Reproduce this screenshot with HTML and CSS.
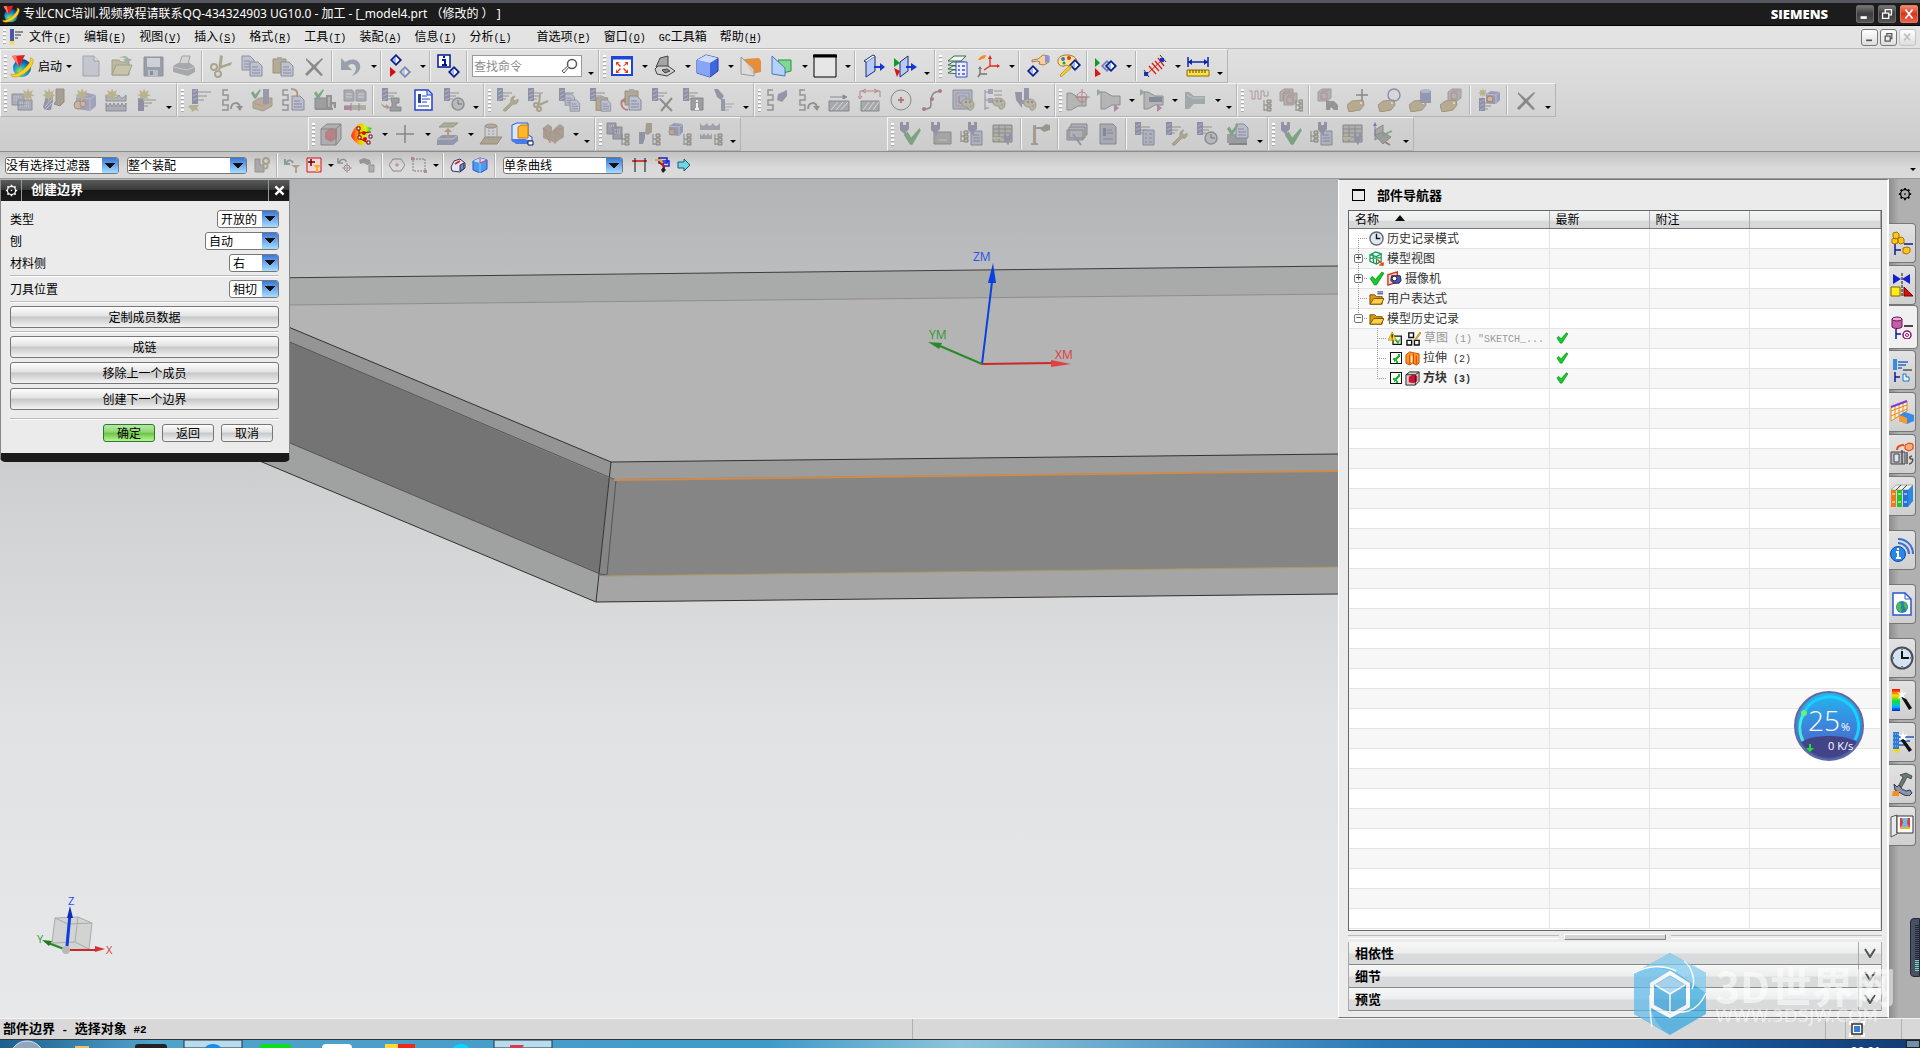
FILE: index.html
```html
<!DOCTYPE html>
<html lang="zh-CN">
<head>
    <meta charset="UTF-8">
    <meta name="viewport" content="width=device-width, initial-scale=1.0">
    <title>UG10.0 - 加工 - [_model4.prt]</title>
    <link rel="stylesheet" href="styles.css">
</head>
<body>

    <!-- 图标库 -->
    <svg class="sprite" aria-hidden="true">
        <defs>
            <linearGradient id="g-blue" x1="0" y1="0" x2="1" y2="1"><stop offset="0" stop-color="#dbe6ff"/><stop offset="1" stop-color="#3f6ee0"/></linearGradient>
            <linearGradient id="g-rain" x1="0" y1="0" x2="1" y2="0"><stop offset="0" stop-color="#f22"/><stop offset=".4" stop-color="#fb0"/><stop offset=".7" stop-color="#cf0"/><stop offset="1" stop-color="#1b3"/></linearGradient>
            <linearGradient id="g-rainv" x1="0" y1="0" x2="0" y2="1"><stop offset="0" stop-color="#f00"/><stop offset=".3" stop-color="#fd0"/><stop offset=".55" stop-color="#1d3"/><stop offset=".8" stop-color="#0bf"/><stop offset="1" stop-color="#11d"/></linearGradient>
            <radialGradient id="g-globe" cx=".4" cy=".7" r=".7"><stop offset="0" stop-color="#9df04a"/><stop offset=".5" stop-color="#1ba0c8"/><stop offset="1" stop-color="#0a3f9a"/></radialGradient>
            <!-- 公用部件 -->
            <g id="p-mill"><path d="M2 1h6v15H2z" fill="#5d648e"/><path d="M3 4l4-2M3 8l4-2M3 12l4-2" stroke="#9aa0c0"/><path d="M8 4h13M8 8h9M8 12h6" stroke="#666" fill="none"/></g>
            <g id="p-mill-s"><path d="M2 0h6v13H2z" fill="#5d648e"/><path d="M3 4l4-2M3 8l4-2M3 12l4-2" stroke="#9aa0c0"/><path d="M8 5h9M8 8h6M8 11h3" stroke="#666" fill="none"/></g>
            <g id="p-star"><path d="M7 0l1.500 4L12 2l-1.500 4L14 7.500l-4 1L11.500 12 8 10l-1.500 4L5.500 10 2 12l1.500-3.500L0 7l3.500-1L2 2l4 2z" fill="#a99a58"/></g>
            <g id="p-tree"><path d="M1 0v11M1 5h4M1 10h4" stroke="#555" fill="none"/><path d="M4 0h4v3H4zM4 4h4v3H4zM4 8h4v3H4z" fill="#b5a878" stroke="#555"/></g>
            <g id="p-doc"><path d="M0 0h8l4 4v10H0z" fill="#aab0cc" stroke="#555b80"/><path d="M2 5h6M2 8h8M2 11h8" stroke="#555b80"/></g>
            <g id="p-clock"><circle cx="7" cy="7" r="6" fill="#a5a9b2" stroke="#5e6064" stroke-width="1.500"/><path d="M7 3v4h4" stroke="#333" fill="none"/></g>
            <g id="p-check"><path d="M0 6l3-3 3 5L13 0l1 2L7 14H5z" fill="#3c8a48"/></g>
            <g id="p-snake"><path d="M9 2H4v5h5v5H4v5h5v5H3" stroke="#686868" fill="none" stroke-width="1.500"/></g>
            <g id="p-cube"><path d="M0 4l5-3 9 1v8l-4 4-10-1z" fill="#7076a8"/><path d="M0 4l10 1 4-3M10 5v9" stroke="#a8adce" fill="none"/></g>
            <g id="p-wrench"><path d="M2 14l7-7c-1-3 1-6 4-6l-2 3 2 2 3-2c1 4-2 6-5 5l-7 7c-2 1-4-1-2-2z" fill="#988c5c" stroke="#6b6440" stroke-width=".6"/></g>
            <g id="p-tag"><path d="M0 5l5-4 11-1 1 5-4 5-11 2z" fill="#a88f58" stroke="#7d6a45"/><circle cx="14" cy="3" r="1" fill="#eee"/></g>
            <g id="p-diamond"><path d="M6 0l6 6-6 6-6-6z" fill="#0a1d86"/><path d="M6 2.500L9.500 6 6 9.500 2.500 6z" fill="#fff"/><path d="M6 2.500v7L2.500 6z" fill="#94b7f5"/></g>
            <g id="p-pal"><path d="M7 1c4 0 7 2 7 6s-3 6-5 5 0-3-2-3-4 0-5-3 1-5 5-5z" fill="#a89f7c" stroke="#77704f"/><circle cx="6" cy="4" r="1.300" fill="#4b6aa8"/><circle cx="10" cy="4" r="1.300" fill="#a84b4b"/><circle cx="11" cy="8" r="1.300" fill="#4ba860"/></g>
            <g id="p-clip"><path d="M0 2h13v14H0z" fill="#a08a58" stroke="#6f6244"/><path d="M4 0h5v4H4z" fill="#888"/></g>
            <g id="p-probe"><path d="M0 0h3v3h3V0h3v7l-3 3v4l-2-3L2 10 0 8z" fill="#666c90"/><path d="M3 10h3l-1 4z" fill="#94559c"/></g>
            <g id="p-funnel"><path d="M0 3h4l7 4h8v9h-8l-7 4H0z" fill="#9fa1a1" stroke="#5c5e60"/></g>
            <g id="p-redbox"><path d="M0 4l4-3h9v9l-4 3H0z" fill="#999" stroke="#777"/><path d="M3 5h6v6H3zM3 5l2-2h6" fill="none" stroke="#b05a5a"/></g>
        </defs>

        <symbol id="nx" viewBox="0 0 24 24"><circle cx="12" cy="14" r="9" fill="url(#g-globe)"/><path d="M1 20c3 2 10-2 15-7 4-4 5-7 4-9 4 0 4 4 1 9-4 6-11 10-16 10-3 0-4-1-4-3z" fill="#ffd21c" stroke="#b88400" stroke-width=".5"/><path d="M2 2l13-1-6 12z" fill="#e02020"/><path d="M2 2l4-1 3 12z" fill="#ff7a6a"/></symbol>
        <symbol id="new" viewBox="0 0 24 24"><path d="M4 2h11l5 5v15H4z" fill="#b3b8ca" stroke="#7a7f96"/><path d="M15 2v5h5" fill="#dde0ea" stroke="#7a7f96"/></symbol>
        <symbol id="open" viewBox="0 0 24 24"><path d="M2 6h7l2 2h8v13H2z" fill="#aaa06c" stroke="#7d7750"/><path d="M2 21l4-10h16l-4 10z" fill="#bdb483" stroke="#7d7750"/><path d="M9 5c3-4 8-4 10 0h3l-5 5-4-5h3c-2-2-4-2-7 0z" fill="#6f9a77"/></symbol>
        <symbol id="save" viewBox="0 0 24 24"><path d="M3 3h19v19H3z" fill="#6c7590" stroke="#586078"/><path d="M6 4h13v9H6z" fill="#c3c9d4"/><path d="M7 16h10v6H7z" fill="#a6abb8"/><path d="M9 17h3v4H9z" fill="#555d74"/></symbol>
        <symbol id="print" viewBox="0 0 24 24"><path d="M7 11l3-9h8l-2 9z" fill="#c9ccd2" stroke="#777"/><path d="M1 12l5-3h12l5 4v5l-7 4L1 18z" fill="#80858e"/><path d="M1 13l14 3 8-3" stroke="#b9bcc2" fill="none"/></symbol>
        <symbol id="cut" viewBox="0 0 24 24"><path d="M11 1l3 1-2 13-3 2zM23 8l-1 3-12 4 1-3z" fill="#8c8154"/><circle cx="5" cy="13" r="3" fill="none" stroke="#8c8154" stroke-width="2"/><circle cx="9" cy="20" r="3" fill="none" stroke="#8c8154" stroke-width="2"/></symbol>
        <symbol id="copy" viewBox="0 0 24 24"><use href="#p-doc" x="2" y="2"/><use href="#p-doc" x="10" y="8"/></symbol>
        <symbol id="paste" viewBox="0 0 24 24"><use href="#p-clip" x="2" y="3"/><use href="#p-doc" x="10" y="8"/></symbol>
        <symbol id="x" viewBox="0 0 24 24"><path d="M4 4l8 7 8-7 1 1-7 8 7 8-2 1-7-7-7 7-2-2 7-7-6-7z" fill="#555"/></symbol>
        <symbol id="undo" viewBox="0 0 24 24"><path d="M2 4v12h11l-4-4c4-4 8-1 8 2s-2 6-4 8c6-2 9-6 8-11S14 3 6 8z" fill="#667890"/></symbol>
        <symbol id="disp" viewBox="0 0 24 24"><use href="#p-diamond" x="2" y="0"/><path d="M2 13v10l6-5z" fill="#d01010"/><g opacity=".45"><use href="#p-diamond" x="11" y="12"/></g></symbol>
        <symbol id="info" viewBox="0 0 24 24"><path d="M1 1h12v12H1z" fill="#fff" stroke="#001a90" stroke-width="1.500"/><path d="M5 6h3v5M5 11h5M6 3h2" stroke="#001a90" stroke-width="2" fill="none"/><use href="#p-diamond" x="11" y="12"/></symbol>
        <symbol id="search" viewBox="0 0 16 16"><circle cx="10" cy="6" r="4.500" fill="none" stroke="#555" stroke-width="1.500"/><path d="M7 9l-5 6-2-2 6-5" fill="#fff" stroke="#555"/></symbol>
        <symbol id="fit" viewBox="0 0 24 24"><path d="M2 3h20v18H2z" fill="#fff" stroke="#1d45d8" stroke-width="2"/><path d="M2 4h20" stroke="#1d45d8" stroke-width="3"/><path d="M6 8h4L8 9l3 3-1 1-3-3-1 2zM18 8h-4l2 1-3 3 1 0 3-2 1 2zM6 19h4l-2-1 3-3-1-1-3 3-1-2zM18 19h-4l2-1-3-3 1-1 3 3 1-2z" fill="#e8351a"/></symbol>
        <symbol id="hinge" viewBox="0 0 24 24"><path d="M3 13L7 4l8-2v11z" fill="#a5a5a5" stroke="#444"/><path d="M2 15l3-3 10 0 7 5-8 5-10-2z" fill="#d0d0d0" stroke="#444"/><path d="M9 16l5-1 3 2-5 2z" fill="#888" stroke="#444"/></symbol>
        <symbol id="cube" viewBox="0 0 24 24"><path d="M1 6l9-5 12 3v13l-8 6-13-4z" fill="#3f66dd" stroke="#1d3fae"/><path d="M1 6l13 3v14L1 19z" fill="#86a6f5"/><path d="M1 6l9-5 12 3-8 5z" fill="#cfdcff"/></symbol>
        <symbol id="sect1" viewBox="0 0 24 24"><path d="M5 5l15-1 2 3v11l-9 2z" fill="#e88d3a"/><path d="M2 3l13 12v7L2 20z" fill="#dcdcd8" fill-opacity=".8" stroke="#999"/></symbol>
        <symbol id="sect2" viewBox="0 0 24 24"><path d="M8 6h13v11l-8 2z" fill="#7edb8e" stroke="#2f8b43"/><path d="M2 2l13 12v8L2 20z" fill="#b5d0fa" stroke="#4a78c0"/></symbol>
        <symbol id="frame" viewBox="0 0 24 24"><path d="M1 1h22v22H1z" fill="#e6e6e6" stroke="#000"/><path d="M0 2h24" stroke="#000" stroke-width="3"/></symbol>
        <symbol id="clip1" viewBox="0 0 24 24"><path d="M4 8l9-6v15l-9 6z" fill="#b8cbf8" stroke="#1c2a70"/><path d="M4 8L2 7l9-6 2 1" fill="#fff" stroke="#1c2a70"/><path d="M12 12h6V9l5 4-5 4v-3h-6z" fill="#1136d6"/></symbol>
        <symbol id="clip2" viewBox="0 0 24 24"><path d="M7 8l8-6v15l-8 6z" fill="#b8cbf8" stroke="#1c2a70"/><path d="M13 12h5V9l6 4-6 4v-3h-5z" fill="#1136d6"/><path d="M1 4v9l6-4z" fill="#0d9a28"/><path d="M1 14l6 3-3 6z" fill="#d91717"/></symbol>
        <symbol id="layers" viewBox="0 0 24 24"><g fill="#eef5ee" stroke="#3b6b4b"><path d="M2 19l5-3h12l-4 4zM2 15l5-3h12l-4 4zM2 11l5-3h12l-4 4zM2 7l6-5h12l-5 5z"/></g><path d="M10 8h11v15H10z" fill="#eaf0ff" stroke="#3c50c8"/><path d="M12 12h2M12 16h2M12 20h2M16 12h3M16 16h3M16 20h3" stroke="#3c50c8" stroke-width="1.500"/></symbol>
        <symbol id="csys" viewBox="0 0 24 24"><path d="M13 4v8h9M13 12l-6 4" stroke="#e02a1a" fill="none" stroke-width="1.300"/><path d="M11 5l2-4 2 4zM20 10l3 2-3 2z" fill="#e02a1a"/><path d="M1 6c2-4 5-5 8-5l-1 3-5 2z" fill="#ff8a1c"/><path d="M3 14v6h7M3 20l-2 3" stroke="#777" stroke-width="1.500" fill="none"/><path d="M1 15l2-3 2 3z" fill="#777"/></symbol>
        <symbol id="hand" viewBox="0 0 24 24"><use href="#p-diamond" x="1" y="11"/><path d="M6 6l6-1 5-4 6 1v6l-5 3-5-1 1-2-3-1-5 1z" fill="#ffcf9a" stroke="#8a5a2a" stroke-width=".7"/><path d="M19 1l4 1v6l-4 1z" fill="#7e97e6"/></symbol>
        <symbol id="palette" viewBox="0 0 24 24"><path d="M10 1c6 0 10 3 10 7s-5 5-8 4-2-1-5 0-7-2-6-6 5-5 9-5z" fill="#ffe19a" stroke="#9a7a2a"/><circle cx="6" cy="5" r="2" fill="#3077e0"/><circle cx="12" cy="4" r="2" fill="#e03a2a"/><circle cx="7" cy="9" r="1.500" fill="#1fa03a"/><use href="#p-diamond" x="12" y="5"/><path d="M11 13l-8 8 1 2 9-8 2-4z" fill="#ffcf1c" stroke="#9a7a2a" stroke-width=".6"/></symbol>
        <symbol id="replay" viewBox="0 0 24 24"><path d="M1 4v9l5-4z" fill="#0d9a28"/><path d="M1 14v9l6-3z" fill="#d91717"/><g opacity=".5"><use href="#p-diamond" x="7" y="6"/></g><use href="#p-diamond" x="11" y="6"/></symbol>
        <symbol id="meas1" viewBox="0 0 24 24"><path d="M3 21L21 4" stroke="#d92020"/><path d="M6 12l7 8M9 9l7 8M12 7l7 8M15 4l6 8" stroke="#d92020" stroke-width="1.300"/><path d="M1 18h4v4H1zM17 4h4v4h-4z" fill="#1c2fd0"/><path d="M17 1l6 7M1 16l5 7" stroke="#333"/></symbol>
        <symbol id="meas2" viewBox="0 0 24 24"><path d="M2 3v10M22 3v10M2 8h20" stroke="#0a28a8" stroke-width="1.500"/><path d="M2 8l4-3v6zM22 8l-4-3v6z" fill="#0a28a8"/><path d="M1 16h22v6H1z" fill="#ffe14a" stroke="#8a6d00"/><path d="M4 16v3M7 16v3M10 16v3M13 16v3M16 16v3M19 16v3" stroke="#5a4600"/></symbol>

        <symbol id="c-prog" viewBox="0 0 24 24"><path d="M1 6h12v11H1zM7 12h14v10H7z" fill="#8c91ae" stroke="#596080"/><path d="M3 9h8M3 12h4M9 15h10M9 18h10" stroke="#c9cce0" stroke-dasharray="1 1"/><use href="#p-star" x="10"/></symbol>
        <symbol id="c-tool" viewBox="0 0 24 24"><path d="M14 1h8v13l-4 4-6-2 2-3z" fill="#8a7a62" stroke="#6b5f4b"/><path d="M4 8h7v5l-2 9H3l-2-3z" fill="#666c90"/><path d="M3 19l7-8M3 22l7-7" stroke="#b9bcd4"/><use href="#p-star"/></symbol>
        <symbol id="c-geo" viewBox="0 0 24 24"><path d="M3 9l8-5 12 3v11l-6 5-14-2z" fill="#7b81b0"/><path d="M3 9l14 2v12M17 11l6-4" stroke="#a9aed0" fill="none"/><circle cx="5" cy="17" r="4" fill="#c9a06a" stroke="#8e5b4b"/><circle cx="10" cy="16" r="3" fill="#c9a06a" stroke="#8e5b4b"/><use href="#p-star" x="2"/></symbol>
        <symbol id="c-meth" viewBox="0 0 24 24"><path d="M2 7v6h20V7c-3 4-5 4-7 0-3 4-5 4-7 0-2 3-4 3-6 0z" fill="#9aa0b0" stroke="#5b6070"/><path d="M2 15l2 4 2-4 2 4 2-4 2 4 2-4 2 4 2-4 2 4 2-4v8H2z" fill="#8c93ac" stroke="#5b6070"/><use href="#p-star" x="1"/></symbol>
        <symbol id="c-op" viewBox="0 0 24 24"><path d="M3 10h6v13H3z" fill="#5d648e"/><path d="M9 12h12M9 15h8M9 18h4" stroke="#666"/><use href="#p-star" x="2"/></symbol>
        <symbol id="gen" viewBox="0 0 24 24"><g transform="translate(2 0)"><use href="#p-mill"/></g><path d="M2 17h9l-2 3 2 3-4-1-3 2-1-3-3-2z" fill="#a99a58"/></symbol>
        <symbol id="replayp" viewBox="0 0 24 24"><use href="#p-snake"/><path d="M12 21c0-7 8-8 9-2" fill="none" stroke="#666" stroke-width="2"/><path d="M17 18h7l-3 5z" fill="#666"/></symbol>
        <symbol id="verify" viewBox="0 0 24 24"><path d="M3 14l6-4h13v8l-9 5-10-3z" fill="#a8906a" stroke="#7d7750"/><path d="M3 15l10 3 9-5" stroke="#c4674a" fill="none"/><path d="M13 1h6v15h-6z" fill="#6c7299"/><g transform="translate(1 1) scale(.7)"><use href="#p-check"/></g></symbol>
        <symbol id="listp" viewBox="0 0 24 24"><use href="#p-snake" x="-2"/><use href="#p-doc" x="11" y="8"/><path d="M10 1c6 0 7 3 6 8" stroke="#a86a4a" fill="none" stroke-width="2"/></symbol>
        <symbol id="machchk" viewBox="0 0 24 24"><path d="M3 10h12v11H3z" fill="#777b80" stroke="#555"/><path d="M15 8h4v12h-4zM3 21h18M19 15h4v5" stroke="#666" stroke-width="2" fill="#999"/><g transform="translate(2 1) scale(.7)"><use href="#p-check"/></g></symbol>
        <symbol id="sync" viewBox="0 0 24 24"><path d="M1 2h8l2 2v9H1zM13 2h8l2 2v9H13z" fill="#8a8e9a" stroke="#6a6e7a"/><path d="M3 6h6M3 9h6M15 6h6M15 9h6" stroke="#ccc"/><path d="M1 17h22v5H1z" fill="#8a9a88"/><path d="M1 20h7" stroke="#a84b8b" stroke-width="4"/><path d="M8 15v8M16 15v8" stroke="#b04444"/></symbol>
        <symbol id="post" viewBox="0 0 24 24"><use href="#p-mill-s"/><path d="M11 10h8v5h-3v4h5v4H10v-4h2v-4z" fill="#77797e" stroke="#55575c"/><path d="M1 15c1 4 3 5 6 5l-1 2 4-3-4-3v2c-2 0-3-1-5-3z" fill="#a8704a"/></symbol>
        <symbol id="shop" viewBox="0 0 24 24"><path d="M4 2h13l4 4v16H4z" fill="#fff" stroke="#2442c8" stroke-width="1.500"/><path d="M16 2v5h5" fill="#cdd8ff" stroke="#2442c8"/><path d="M7 6h3v9H7z" fill="#2442a8"/><path d="M11 8h5M11 11h8M11 14h5M7 18h11" stroke="#2442c8"/></symbol>
        <symbol id="millclock" viewBox="0 0 24 24"><use href="#p-mill-s"/><use href="#p-clock" x="9" y="9"/></symbol>
        <symbol id="milledit" viewBox="0 0 24 24"><use href="#p-mill-s"/><use href="#p-wrench" x="7" y="7"/></symbol>
        <symbol id="millcut" viewBox="0 0 24 24"><use href="#p-mill-s"/><path d="M14 6l-1 10M22 13l-9 4" stroke="#8c8154" stroke-width="2"/><circle cx="10" cy="17" r="2" fill="none" stroke="#8c8154" stroke-width="2"/><circle cx="13" cy="21" r="2" fill="none" stroke="#8c8154" stroke-width="2"/></symbol>
        <symbol id="millcopy" viewBox="0 0 24 24"><use href="#p-mill-s"/><g transform="translate(8 6) scale(.8)"><use href="#p-doc"/></g><g transform="translate(13 12) scale(.8)"><use href="#p-doc"/></g></symbol>
        <symbol id="millpaste" viewBox="0 0 24 24"><use href="#p-mill-s"/><g transform="translate(8 8) scale(.9)"><use href="#p-clip"/></g><g transform="translate(13 12) scale(.8)"><use href="#p-doc"/></g></symbol>
        <symbol id="pasteinto" viewBox="0 0 24 24"><use href="#p-clip" x="6" y="1"/><use href="#p-doc" x="10" y="8"/><path d="M9 22c-7-1-8-7-5-10" stroke="#a84b4b" stroke-width="2" fill="none"/><path d="M1 13l6-4v6z" fill="#a84b4b"/></symbol>
        <symbol id="milldel" viewBox="0 0 24 24"><use href="#p-mill-s"/><path d="M10 11l12 12M22 10L11 23" stroke="#5e5e5e" stroke-width="2"/></symbol>
        <symbol id="millinfo" viewBox="0 0 24 24"><use href="#p-mill-s"/><path d="M10 10h12v12H10z" fill="#77797f" stroke="#555"/><path d="M16 12v2M16 15v6M14 21h4" stroke="#fff" stroke-width="2"/></symbol>
        <symbol id="milllight" viewBox="0 0 24 24"><path d="M2 1h4l6 7-3 4-4-3z" fill="#666c90"/><path d="M9 11h4v12H9z" fill="#6c7299"/><path d="M13 16h9M13 19h7M13 22h4" stroke="#888"/></symbol>
        <symbol id="pathlight" viewBox="0 0 24 24"><use href="#p-snake" x="-1"/><path d="M22 2l-9 4-1 6 5 2 5-6z" fill="#666c90"/></symbol>
        <symbol id="hatch1" viewBox="0 0 24 24"><path d="M3 9h15M16 7l4 2-4 2z" stroke="#50587a" fill="#50587a"/><path d="M2 13h20v10H2z" fill="#8b8d92" stroke="#55575c"/><path d="M4 22l7-8M9 22l7-8M14 22l7-8" stroke="#ddd"/></symbol>
        <symbol id="hatch2" viewBox="0 0 24 24"><path d="M2 9V3h20v6M8 1L4 3l4 2M16 1l4 2-4 2M0 8l2 3 2-3" stroke="#a84b4b" fill="none"/><path d="M3 13h18v10H3z" fill="#8b8d92" stroke="#55575c"/><path d="M5 22l6-8M10 22l6-8M15 22l6-8" stroke="#ddd"/></symbol>
        <symbol id="circ" viewBox="0 0 24 24"><circle cx="12" cy="12" r="10" fill="none" stroke="#555"/><path d="M12 9v6M9 12h6" stroke="#a83a3a" stroke-width="2"/></symbol>
        <symbol id="curve" viewBox="0 0 24 24"><path d="M4 21c10 0 6-5 7-10s2-7 9-8" fill="none" stroke="#555" stroke-width="1.500"/><circle cx="4" cy="21" r="2" fill="#a83a3a"/><circle cx="12" cy="11" r="2" fill="#a83a3a"/><circle cx="20" cy="3" r="2" fill="#a83a3a"/></symbol>
        <symbol id="boxpal" viewBox="0 0 24 24"><path d="M2 2h19v19H2z" fill="#999fb8" stroke="#555b80"/><path d="M5 5h13v13H5zM8 8h7v7H8z" fill="none" stroke="#70759a"/><path d="M8 8v7h7" stroke="#a84b4b" fill="none"/><use href="#p-pal" x="9" y="10"/></symbol>
        <symbol id="treepal" viewBox="0 0 24 24"><path d="M3 2v20M3 4h4M3 12h4M3 20h4M12 3h8M12 7h8" stroke="#666" fill="none"/><path d="M6 1h5v5H6zM6 10h5v5H6z" fill="#7b81a8"/><use href="#p-pal" x="9" y="9"/></symbol>
        <symbol id="toolpal" viewBox="0 0 24 24"><path d="M2 4h7v16l-6-8zM11 0h5v12h-5z" fill="#666c90"/><path d="M9 12h7l2 4H8z" fill="#777"/><use href="#p-pal" x="9" y="10"/></symbol>
        <symbol id="fun1" viewBox="0 0 24 24"><use href="#p-funnel" x="1" y="2"/><circle cx="16" cy="9" r="5" fill="none" stroke="#a84b4b"/><path d="M16 1v16M9 9h15" stroke="#a84b4b"/></symbol>
        <symbol id="fun2" viewBox="0 0 24 24"><use href="#p-funnel" x="4" y="1"/><path d="M0 1v7l5-4z" fill="#668a90"/><path d="M17 16v8l5-4z" fill="#9a558a"/></symbol>
        <symbol id="fun3" viewBox="0 0 24 24"><use href="#p-funnel" x="4" y="1"/><path d="M9 9h13v5H9z" fill="#50587a"/><path d="M0 1v7l5-4z" fill="#668a90"/><path d="M17 16v8l5-4z" fill="#9a558a"/></symbol>
        <symbol id="fun4" viewBox="0 0 24 24"><path d="M2 4h4l5 4h11v8H11l-5 5H2z" fill="#7f8c90"/><path d="M4 7l6 3h11" stroke="#b3c0c4" fill="none"/></symbol>
        <symbol id="feat1" viewBox="0 0 24 24"><path d="M1 3h3v8h3V3h3v8h3V3h3v5h4V3" stroke="#9a6a72" fill="none"/><use href="#p-tree" x="15" y="12"/></symbol>
        <symbol id="feat2" viewBox="0 0 24 24"><use href="#p-redbox" x="1" y="0"/><use href="#p-redbox" x="5" y="4"/><use href="#p-tree" x="16" y="12"/></symbol>
        <symbol id="find" viewBox="0 0 24 24"><use href="#p-redbox" x="2" y="0"/><path d="M10 12l4 1 4 0 4 4v5h-4l-3-3-1 3h-4z" fill="#6a6c74"/></symbol>
        <symbol id="tagpt" viewBox="0 0 24 24"><use href="#p-tag" x="0" y="12"/><path d="M15 1v12M9 7h12" stroke="#555" stroke-width="1.500"/></symbol>
        <symbol id="tagring" viewBox="0 0 24 24"><use href="#p-tag" x="0" y="12"/><ellipse cx="16" cy="7" rx="6" ry="6" fill="none" stroke="#5b6298" stroke-width="1.500"/></symbol>
        <symbol id="tagcyl" viewBox="0 0 24 24"><use href="#p-tag" x="0" y="12"/><path d="M11 3v12h11V3c-2-2-9-2-11 0z" fill="#656da0"/><ellipse cx="16.500" cy="3" rx="5" ry="2" fill="#9aa0c8"/></symbol>
        <symbol id="tagbox" viewBox="0 0 24 24"><use href="#p-redbox" x="8" y="0"/><use href="#p-tag" x="0" y="12"/></symbol>
        <symbol id="featop" viewBox="0 0 24 24"><use href="#p-cube" x="9" y="2"/><circle cx="13" cy="11" r="3" fill="#c9a06a" stroke="#a83a3a"/><g transform="translate(0 10)"><use href="#p-mill-s"/></g><g transform="translate(1 0) scale(.7)"><use href="#p-star"/></g></symbol>

        <symbol id="wirebox" viewBox="0 0 24 24"><path d="M2 7l6-5h14v15l-5 6H2z" fill="#9a9a9a" stroke="#555"/><path d="M6 10l6-4 6 2v8l-6 4-6-3z" fill="#b84a52"/><path d="M2 7h15v16M17 7l5-5" stroke="#555" fill="none"/></symbol>
        <symbol id="rain" viewBox="0 0 24 24"><path d="M1 14C3 7 7 2 12 1c3 3 6 4 10 5-4 4-6 9-8 17-5 1-10-3-13-9z" fill="url(#g-rain)"/><path d="M9 6v10l9 5M9 11l12-1" stroke="#7a0018" fill="none"/><path d="M7 5h3v3H7zM8 14h3v3H8zM17 19h3v3h-3zM19 13h3v3h-3z" fill="#fff" stroke="#7a0018"/><circle cx="14" cy="11" r="2" fill="#e00"/><circle cx="15" cy="17" r="2" fill="#e00"/></symbol>
        <symbol id="plus" viewBox="0 0 24 24"><path d="M12 3v18M3 12h18" stroke="#555" stroke-width="1.500"/></symbol>
        <symbol id="proj" viewBox="0 0 24 24"><path d="M3 5l5-4h14l-5 4z" fill="#9a9464" stroke="#736e4b"/><path d="M1 17l5-4h16v6l-5 4H1z" fill="#6c7299"/><path d="M1 17h16l5-4" stroke="#b9bcd4" fill="none"/><path d="M11 16v-6H8l4-4 4 4h-3v6z" fill="#a8704a"/></symbol>
        <symbol id="bridge" viewBox="0 0 24 24"><path d="M1 22l5-7h17l-5 7z" fill="#9a8a5c" stroke="#6e6344"/><ellipse cx="12" cy="4" rx="6" ry="2" fill="#8a9a72" stroke="#a84b4b"/><path d="M6 4v14M18 4v14" stroke="#777"/><path d="M10 5v13M14 5v13" stroke="#666a98" stroke-dasharray="2 1"/></symbol>
        <symbol id="move" viewBox="0 0 24 24"><path d="M2 3l5-2h11v12l4 2v4H2z" fill="#d8e6ff" stroke="#2a5ad0"/><path d="M8 5l3-2h7v13H8z" fill="#ffb62a" stroke="#c87a00"/><path d="M2 17h13l6 2v3H6l-4-3z" fill="#4a7ae8"/><path d="M18 19h5v4h-5z" fill="#fff" stroke="#001a70"/></symbol>
        <symbol id="mesh" viewBox="0 0 24 24"><path d="M2 6l5-4 4 3v5l4-5 4-3 4 3v10l-9 6-12-5z" fill="#8f8068"/><path d="M2 6l7 5v10M9 11l5-4 8 0M14 7v15M2 6l7 15M14 8l8 8" stroke="#a8604a" fill="none"/></symbol>
        <symbol id="t-prog" viewBox="0 0 24 24"><path d="M1 1h9v11H1zM7 5h9v12H7z" fill="#7a7f98" stroke="#555b70"/><path d="M3 4h5M9 8h5M9 11h5" stroke="#c0c3d4" stroke-dasharray="1 1"/><use href="#p-tree" x="15" y="12"/></symbol>
        <symbol id="t-tool" viewBox="0 0 24 24"><path d="M9 1h6v9l-4 3-3-1z" fill="#8a7a62"/><path d="M2 10h6v6l-2 6H2z" fill="#666c90"/><use href="#p-tree" x="15" y="12"/></symbol>
        <symbol id="t-geo" viewBox="0 0 24 24"><use href="#p-cube" x="1" y="0"/><circle cx="4" cy="10" r="3" fill="#b08a6a" stroke="#8e5b4b"/><use href="#p-tree" x="15" y="12"/></symbol>
        <symbol id="t-meth" viewBox="0 0 24 24"><path d="M1 1v7h20V1c-3 4-5 4-7 0-3 4-4 4-6 0-3 4-5 3-7 0zM1 11l2 3 2-3 2 3 2-3 2 3 2-3v6H1z" fill="#7d828e"/><use href="#p-tree" x="15" y="12"/></symbol>
        <symbol id="pr-ok" viewBox="0 0 24 24"><use href="#p-probe" x="2" y="0"/><g transform="translate(6 6) scale(1.200)"><use href="#p-check"/></g></symbol>
        <symbol id="pr-box" viewBox="0 0 24 24"><path d="M5 10h17v12H5z" fill="#888" stroke="#5e5e5e"/><path d="M10 18h8" stroke="#bbb"/><use href="#p-probe" x="2" y="0"/></symbol>
        <symbol id="pr-tree" viewBox="0 0 24 24"><use href="#p-tree" x="0" y="9"/><path d="M11 9h11v14H11z" fill="#999fb8" stroke="#555b80"/><path d="M13 13h6M13 16h7M13 19h7" stroke="#555b80"/><use href="#p-probe" x="8" y="0"/></symbol>
        <symbol id="pr-grid" viewBox="0 0 24 24"><path d="M2 3h19v17H2z" fill="#999" stroke="#555"/><path d="M2 7h19M2 11h19M2 15h19M8 3v17M14 3v17" stroke="#5e5e5e"/><path d="M2 16h8" stroke="#b0a848" stroke-width="2"/><g transform="translate(13 12) scale(.8)"><use href="#p-probe"/></g></symbol>
        <symbol id="arm" viewBox="0 0 24 24"><path d="M5 3h3v18h2v2H3v-2h2z" fill="#8a7a62"/><path d="M8 5h6l4-3 4 1v5l-6 2-4-3H8z" fill="#7a6f5c"/></symbol>
        <symbol id="cards" viewBox="0 0 24 24"><path d="M6 2h16v11H6z" fill="#999fb0" stroke="#555"/><path d="M4 5h16v11H4zM2 8h16v10H2z" fill="#9a9c9e" stroke="#5b5b66"/><path d="M8 12l8 11" stroke="#666c98" stroke-width="2"/></symbol>
        <symbol id="shop2" viewBox="0 0 24 24"><path d="M4 2h13l3 3v17H4z" fill="#8d92a4" stroke="#555b70"/><path d="M7 6h3v8H7z" fill="#50587a"/><path d="M11 8h5M11 11h6M7 17h10" stroke="#555b70"/></symbol>
        <symbol id="milllist" viewBox="0 0 24 24"><use href="#p-mill-s"/><path d="M10 8h11v15H10z" fill="#999fb8" stroke="#555b80"/><path d="M12 12h2M12 16h2M12 20h2M16 12h3M16 16h3M16 20h3" stroke="#555b80"/></symbol>
        <symbol id="machdoc" viewBox="0 0 24 24"><path d="M1 12h20v9H1z" fill="#777b80"/><path d="M3 21h18v2H3z" fill="#555"/><use href="#p-doc" x="10" y="2"/><g transform="translate(1 2) scale(.8)"><use href="#p-check"/></g></symbol>
        <symbol id="axes" viewBox="0 0 24 24"><path d="M3 8l8-5v10l-8 5z" fill="#8c8e8e" stroke="#5b5e60"/><path d="M3 13l8-3 8 5-8 7z" fill="#7a7c7c" stroke="#5b5e60"/><path d="M3 4v10" stroke="#3a48a0"/><path d="M1 4l2-4 2 4z" fill="#3a48a0"/><path d="M11 13l9-4" stroke="#3c8a48" stroke-width="1.500"/><path d="M13 20l5 3" stroke="#a83a3a" stroke-width="2"/></symbol>

        <!-- 选择条 16px -->
        <symbol id="s-chain" viewBox="0 0 16 16"><path d="M1 2h5v6h4v7H1z" fill="#8a8a8a" stroke="#666"/><circle cx="12" cy="4" r="3" fill="none" stroke="#8c8154" stroke-width="2"/><circle cx="11" cy="9" r="2.500" fill="none" stroke="#8c8154" stroke-width="2"/></symbol>
        <symbol id="s-fund" viewBox="0 0 16 16"><path d="M1 2v5h5M2 6c3-4 6-3 7 0" fill="none" stroke="#5a7c70" stroke-width="2"/><path d="M7 8h9l-3 3v5h-2v-5z" fill="#98804c"/></symbol>
        <symbol id="s-snap" viewBox="0 0 16 16"><path d="M1 1h14v14H1z" fill="#f0d8d8" stroke="#d01020"/><path d="M5 2v7M2 5h7" stroke="#600" stroke-width="1.500"/><path d="M7 8h8l-3 3v4h-2v-4z" fill="#ffb020"/></symbol>
        <symbol id="s-und" viewBox="0 0 16 16"><path d="M1 1v5h5M2 5c3-4 7-3 7 0" fill="none" stroke="#667" stroke-width="1.500"/><circle cx="10" cy="11" r="3" fill="none" stroke="#a84b4b"/><path d="M10 6v10M5 11h10" stroke="#777"/></symbol>
        <symbol id="s-grab" viewBox="0 0 16 16"><path d="M0 3l5-2 6 2 1 4-4 1-3-2-4 1z" fill="#6e7060"/><path d="M10 8h5v7h-5z" fill="#8a9a88" stroke="#666"/></symbol>
        <symbol id="s-hex" viewBox="0 0 16 16"><path d="M4 2h8l4 6-4 6H4L0 8z" fill="none" stroke="#555"/><path d="M8 6v4M6 8h4" stroke="#a84b4b"/></symbol>
        <symbol id="s-rect" viewBox="0 0 16 16"><path d="M2 2h12v12H2z" fill="none" stroke="#444" stroke-dasharray="2 1"/><path d="M0 0h3v3H0zM13 13h3v3h-3z" fill="#a0585a"/></symbol>
        <symbol id="s-car" viewBox="0 0 16 16"><path d="M1 10l3-6 6-2 5 4v5l-5 4-8-1z" fill="#e6e8f6" stroke="#335"/><path d="M5 7l5-3" stroke="#d22" stroke-width="2" fill="none"/><path d="M10 8l4-2v6l-4 2z" fill="#6f86c8" stroke="#335"/></symbol>
        <symbol id="s-cube" viewBox="0 0 16 16"><path d="M1 4l7-3 7 2v9l-7 4-7-3z" fill="#4a9af0" stroke="#2a55c8"/><path d="M1 4l7 2 7-3-7-2z" fill="#bfe0ff"/><path d="M8 6v10" stroke="#9cf"/><path d="M8 1v5l7-3" stroke="#e03a5a" fill="none"/></symbol>
        <symbol id="s-int" viewBox="0 0 16 16"><path d="M0 4h15" stroke="#d01010" stroke-width="1.500"/><path d="M3 1v14M13 1v14" stroke="#111"/></symbol>
        <symbol id="s-follow" viewBox="0 0 16 16"><path d="M5 1h8v5H5zM9 4h6v5H9z" fill="none" stroke="#1020d8" stroke-width="1.500"/><path d="M1 3h5l3 3" stroke="#ffa010" stroke-width="2" fill="none"/><path d="M6 6l4 3v3" stroke="#d01010" stroke-width="2" fill="none"/><path d="M9 10l3 3-3 3-2-3z" fill="#222"/></symbol>
        <symbol id="s-next" viewBox="0 0 16 16"><path d="M2 5h6V2l6 6-6 6v-3H2z" fill="#6fd8e8" stroke="#1d5a6a"/></symbol>

        <!-- 导航器 16px -->
        <symbol id="n-clock" viewBox="0 0 16 16"><circle cx="8" cy="8" r="7" fill="#dfe8f0" stroke="#667" stroke-width="1.500"/><path d="M8 3v5h4" stroke="#112" stroke-width="1.500" fill="none"/></symbol>
        <symbol id="n-view" viewBox="0 0 16 16"><path d="M1 4l6-3 6 2v8l-5 3-7-3zM1 4l7 2 5-3M8 6v8M4 2l1 10M1 8l12-1" fill="none" stroke="#0d9a55" stroke-width="1.300"/><path d="M9 9l6 6M15 12v3h-4" stroke="#e8401a" stroke-width="1.500" fill="none"/></symbol>
        <symbol id="n-tick" viewBox="0 0 14 14"><path d="M1 7l2-2 3 3 6-7 2 1-7 11H5z" fill="#12cc28" stroke="#0a7a18" stroke-width=".6"/></symbol>
        <symbol id="n-cam" viewBox="0 0 16 16"><path d="M1 4l10-3v11L1 15z" fill="#f6d8d0" stroke="#d8301a" stroke-width="1.500"/><path d="M5 5h9l1 5-2 3H7l-3-3z" fill="#4a5ab8" stroke="#223"/><circle cx="8" cy="8" r="2.500" fill="#fff" stroke="#223"/></symbol>
        <symbol id="n-fold" viewBox="0 0 16 16"><path d="M1 4h5l2 2h6v8H1z" fill="#d99a12" stroke="#7d5400"/><path d="M1 14l4-6h11l-3 6z" fill="#ffcf4a" stroke="#7d5400"/></symbol>
        <symbol id="n-expr" viewBox="0 0 16 16"><use href="#n-fold"/><path d="M9 1h6M9 3h6" stroke="#1a1a88"/></symbol>
        <symbol id="n-warn" viewBox="0 0 18 16"><path d="M6 5h10v10H6z" fill="#fff" stroke="#111" stroke-width="1.500"/><path d="M8 10l2-1 2 2 4-4-4 8z" fill="#12bb28"/><path d="M5 0l5 10H0z" fill="#ffe01a" stroke="#a08000" stroke-width=".7"/><path d="M5 3v4M5 8v1" stroke="#111" stroke-width="1.500"/></symbol>
        <symbol id="n-sketch" viewBox="0 0 16 16"><path d="M3 2h5v5H3zM1 10h5v5H1zM9 10h5v5H9z" fill="#fff" stroke="#111" stroke-width="1.500"/><path d="M15 1l-5 7-1 2 2-1 5-7z" fill="#ffb51a" stroke="#805000" stroke-width=".5"/></symbol>
        <symbol id="n-ext" viewBox="0 0 16 16"><path d="M1 4l4-3 5 1 5 1v10l-3 2-4-2-3 2-4-2z" fill="#ff9a1c" stroke="#c04a00"/><path d="M5 4v10M9 3v10M12 5v9" stroke="#d8301a"/><path d="M6 5h2v7H6z" fill="#ffe9b0"/></symbol>
        <symbol id="n-block" viewBox="0 0 16 16"><path d="M1 4l4-3h10v10l-4 4H1z" fill="#d8d0d0" stroke="#222"/><path d="M4 6l4-2 5 1v6l-4 2-5-1z" fill="#d80f30"/><path d="M1 4h10v11M11 4l4-3" stroke="#222" fill="none"/></symbol>
        <symbol id="gear" viewBox="0 0 16 16"><circle cx="8" cy="8" r="5" fill="none" stroke="currentColor" stroke-width="1.500"/><circle cx="8" cy="8" r="1" fill="currentColor"/><path d="M8 1v2M8 13v2M1 8h2M13 8h2M3 3l1.500 1.500M11.500 11.500L13 13M13 3l-1.500 1.500M4.500 11.500L3 13" stroke="currentColor" stroke-width="2"/></symbol>

        <!-- 资源条 24px -->
        <symbol id="r-asm" viewBox="0 0 24 24"><path d="M5 13v11M5 19h6M14 13h9" stroke="#111a90" stroke-width="1.500"/><g fill="#ffc61a" stroke="#a87000"><path d="M3 2l4-1 2 2v4l-4 1-2-2zM2 8l4-1 2 2v3l-4 1-2-1zM8 7l4-1 2 2v4l-4 1-2-2zM13 17l4-1 3 1v4l-3 2-4-1z"/></g></symbol>
        <symbol id="r-con" viewBox="0 0 24 24"><path d="M3 1v10l8-5zM20 1v10l-8-5z" fill="#1420d0"/><path d="M12 0v24" stroke="#111" stroke-dasharray="3 1"/><path d="M1 14h9v9H1z" fill="#ffec1a" stroke="#806000"/><path d="M14 14v9h9z" fill="#d81010" stroke="#700"/></symbol>
        <symbol id="r-part" viewBox="0 0 24 24"><path d="M1 4v8c2 2 8 2 10 0V4z" fill="#c060a8" stroke="#701058"/><ellipse cx="6" cy="4" rx="5" ry="2" fill="#e8b0dc" stroke="#701058"/><path d="M13 11h9" stroke="#111" stroke-width="1.500"/><path d="M5 14v10M5 19h5" stroke="#111a90" stroke-width="1.500"/><circle cx="16" cy="20" r="4" fill="#fff" stroke="#901068" stroke-width="1.500"/><circle cx="16" cy="20" r="1.500" fill="none" stroke="#901068"/></symbol>
        <symbol id="r-op" viewBox="0 0 24 24"><path d="M3 1h4v11H3z" fill="#3a8ae0"/><path d="M8 4h10M8 7h8M8 10h4" stroke="#2a6ac8" stroke-width="1.500"/><path d="M13 12h9" stroke="#111"/><path d="M5 14v10M5 19h5" stroke="#111a90" stroke-width="1.500"/><path d="M13 16h3v3h3v4h-6z" fill="#dff" stroke="#2a6ac8"/></symbol>
        <symbol id="m-mill" viewBox="0 0 16 18"><path d="M3 1h4v12H3z" fill="#4a56a8"/><path d="M8 4h8M8 7h6M8 10h3" stroke="#333"/><path d="M2 13h6l-1 2 1 2-3-1-3 1 1-2z" fill="#f0dc50"/></symbol>
        <symbol id="r-tool" viewBox="0 0 24 24"><path d="M1 7l16-6v10L1 21z" fill="#fff0d8" stroke="#e08a2a"/><path d="M1 11l16-6M1 16l16-7M5 6v12M9 4v12M13 3v11" stroke="#e08a2a"/><path d="M1 7l16-6" stroke="#7a3ad0" stroke-width="2"/><path d="M9 15l6-3 9 3v6l-7 3-8-3z" fill="#3a8ae8"/><path d="M9 15l8 3v6l-8-3z" fill="#ff9a2a"/></symbol>
        <symbol id="r-mach" viewBox="0 0 24 24"><path d="M1 10h14v12H1z" fill="#b8bcc4" stroke="#444"/><path d="M4 12h5v8H4z" fill="#dfe6f0" stroke="#444"/><path d="M12 8v14M17 10v12M22 14c-4 1-2 3 0 3s0 5-3 5" stroke="#555" stroke-width="1.500" fill="none"/><path d="M15 3l4-2 4 1v5l-4 2-4-2z" fill="#ffb070" stroke="#e03010"/><path d="M7 8c0-4 3-5 7-5" stroke="#e84a10" stroke-width="2" fill="none"/></symbol>
        <symbol id="r-books" viewBox="0 0 24 24"><path d="M18 6l5-5v16l-5 6z" fill="#2a8ae0"/><path d="M1 6l5-5h17l-5 5z" fill="#e8f0e8" stroke="#777" stroke-width=".5"/><path d="M1 6h5v17H1z" fill="#f07a1a"/><path d="M7 6h5v17H7z" fill="#2ac02a"/><path d="M13 6h5v17h-5z" fill="#2a70d8"/><path d="M6 6l5-5M12 6l5-5" stroke="#444"/><path d="M2 10h3M8 10h3M14 10h3M2 18h3M8 18h3M14 18h3" stroke="#fff"/></symbol>
        <symbol id="r-info" viewBox="0 0 24 24"><circle cx="8" cy="16" r="7.500" fill="#2a86e8" stroke="#0d4aa8"/><path d="M8 10v2M6 14h2v6M6 20h5" stroke="#fff" stroke-width="2" fill="none"/><path d="M8 1c8 0 15 6 15 15M8 5c6 0 11 5 11 11" fill="none" stroke="#3a70d0" stroke-width="2"/></symbol>
        <symbol id="r-web" viewBox="0 0 24 24"><path d="M3 1h12l6 6v16H3z" fill="#fff" stroke="#2a5ad0" stroke-width="1.500"/><path d="M15 1v6h6" fill="none" stroke="#2a5ad0"/><circle cx="12" cy="15" r="6" fill="#2a80b0"/><path d="M8 11c3-1 4 1 3 3s2 3 0 6c-4-1-6-6-3-9zM14 10c3 2 4 5 2 8-1-3-3-4-2-8z" fill="#4ac04a"/></symbol>
        <symbol id="r-hist" viewBox="0 0 24 24"><circle cx="12" cy="12" r="10.500" fill="#d4e2f2" stroke="#4a4e58" stroke-width="2"/><path d="M12 5v7h7" stroke="#111" stroke-width="2" fill="none"/><path d="M12 3v1M12 20v1M3 12h1M20 12h1" stroke="#111"/></symbol>
        <symbol id="r-vis" viewBox="0 0 24 24"><path d="M2 1h8v22H2z" fill="url(#g-rainv)"/><path d="M10 7l3-1 9 14-3 2z" fill="#111"/><path d="M12 1l1 4 4-1-3 3 2 4-4-2-4 2 2-4-3-3 4 1z" fill="#fff"/></symbol>
        <symbol id="r-wiz" viewBox="0 0 24 24"><path d="M3 2h6v17H3z" fill="#2a7ad8"/><path d="M3 4h6M3 8h6M3 12h6M3 16h6" stroke="#9cf" stroke-dasharray="1 1"/><path d="M9 7h15M9 11h11M9 15h9" stroke="#2a5ab8" stroke-width="1.500"/><path d="M10 9l3-1 9 12-3 2z" fill="#111"/><path d="M13 1l1 4 4-1-3 3 2 4-4-2-4 2 2-4-3-3 4 1z" fill="#fff"/><path d="M2 19h9l-3 4-3-1z" fill="#ffd21c"/></symbol>
        <symbol id="r-tools" viewBox="0 0 24 24"><path d="M10 3l6-2 6 3-1 3-4-2-3 6-3 5-3-1 5-10z" fill="#6a7a70" stroke="#333" stroke-width=".7"/><path d="M4 12l3 3 2-2 3 4 4 2 4-1 2 3-3 3-5-1-9-5z" fill="#8a94b0" stroke="#334"/><path d="M3 19h6v5H2z" fill="#ff8a1c"/></symbol>
        <symbol id="r-role" viewBox="0 0 24 24"><path d="M1 3l6-2v19l-6 3z" fill="#e8e8e8" stroke="#555"/><path d="M7 2h16v17H7z" fill="#fff" stroke="#333"/><path d="M10 4h10v11H10z" fill="#e83a2a"/><path d="M12 4h6l-1 5 2 4h-8l2-4z" fill="#6ab8f0"/><path d="M10 13h10v2H10z" fill="#ffb020"/></symbol>
    </svg>

    <!-- 标题栏 -->
    <header class="titlebar">
        <svg class="app-icon"><use href="#nx"/></svg>
        <h1>专业CNC培训.视频教程请联系QQ-434324903 UG10.0 - 加工 - [_model4.prt （修改的 ） ]</h1>
        <span class="brand">SIEMENS</span>
        <div class="win-buttons">
            <button aria-label="最小化"><svg viewBox="0 0 18 18"><path d="M4 13h7" stroke="#fff" stroke-width="3"/></svg></button>
            <button aria-label="还原"><svg viewBox="0 0 18 18"><path d="M4 8h7v6H4zM7 8V4h7v6h-3" fill="none" stroke="#fff" stroke-width="1.500"/></svg></button>
            <button class="close" aria-label="关闭"><svg viewBox="0 0 18 18"><path d="M5 4l8 10M13 4L5 14" stroke="#fff" stroke-width="2"/></svg></button>
        </div>
    </header>

    <!-- 菜单 -->
    <nav class="menubar">
        <span class="grip"></span>
        <svg class="menu-icon"><use href="#m-mill"/></svg>
        <a href="#">文件<span class="key">(<u>F</u>)</span></a>
        <a href="#">编辑<span class="key">(<u>E</u>)</span></a>
        <a href="#">视图<span class="key">(<u>V</u>)</span></a>
        <a href="#">插入<span class="key">(<u>S</u>)</span></a>
        <a href="#">格式<span class="key">(<u>R</u>)</span></a>
        <a href="#">工具<span class="key">(<u>T</u>)</span></a>
        <a href="#">装配<span class="key">(<u>A</u>)</span></a>
        <a href="#">信息<span class="key">(<u>I</u>)</span></a>
        <a href="#" class="wide">分析<span class="key">(<u>L</u>)</span></a>
        <a href="#">首选项<span class="key">(<u>P</u>)</span></a>
        <a href="#">窗口<span class="key">(<u>O</u>)</span></a>
        <a href="#"><span class="key">GC</span>工具箱</a>
        <a href="#">帮助<span class="key">(<u>H</u>)</span></a>
        <div class="mdi-buttons">
            <button aria-label="最小化窗口"><svg viewBox="0 0 18 18"><path d="M5 13h7" stroke="#555" stroke-width="2"/></svg></button>
            <button aria-label="还原窗口"><svg viewBox="0 0 18 18"><path d="M5 8h6v6H5zM7 7V5h6v6h-2" fill="none" stroke="#555" stroke-width="1.500"/></svg></button>
            <button aria-label="关闭窗口" disabled><svg viewBox="0 0 18 18"><path d="M5 5l7 8M12 5l-7 8" stroke="#c0c0c0" stroke-width="2"/></svg></button>
        </div>
    </nav>

    <!-- 工具栏 -->
    <div class="toolbars">
        <div class="toolrow">
            <div class="toolbar">
                <span class="grip"></span>
                <button class="start"><svg class="icon"><use href="#nx"/></svg>启动<i class="arrow"></i></button>
                <button class="tool off" aria-label="新建"><svg class="icon"><use href="#new"/></svg></button>
                <button class="tool off" aria-label="打开"><svg class="icon"><use href="#open"/></svg></button>
                <button class="tool off" aria-label="保存"><svg class="icon"><use href="#save"/></svg></button>
                <button class="tool off" aria-label="打印"><svg class="icon"><use href="#print"/></svg></button>
                <span class="sep"></span>
                <button class="tool off" aria-label="剪切"><svg class="icon"><use href="#cut"/></svg></button>
                <button class="tool off" aria-label="复制"><svg class="icon"><use href="#copy"/></svg></button>
                <button class="tool off" aria-label="粘贴"><svg class="icon"><use href="#paste"/></svg></button>
                <button class="tool off" aria-label="删除"><svg class="icon"><use href="#x"/></svg></button>
                <span class="sep"></span>
                <button class="tool off" aria-label="撤消"><svg class="icon"><use href="#undo"/></svg></button><button class="drop" aria-label="撤消列表"></button>
                <span class="sep"></span>
                <button class="tool" aria-label="编辑显示"><svg class="icon"><use href="#disp"/></svg></button><button class="drop" aria-label="显示选项"></button>
                <span class="sep"></span>
                <button class="tool" aria-label="信息"><svg class="icon"><use href="#info"/></svg></button>
                <span class="sep"></span>
                <label class="finder"><input type="text" placeholder="查找命令" aria-label="查找命令"><svg><use href="#search"/></svg></label>
                <button class="more" aria-label="更多"></button>
            </div>
            <div class="toolbar">
                <span class="grip"></span>
                <button class="tool" aria-label="适合窗口"><svg class="icon"><use href="#fit"/></svg></button><button class="drop" aria-label="缩放选项"></button>
                <button class="tool" aria-label="定向视图"><svg class="icon"><use href="#hinge"/></svg></button><button class="drop" aria-label="定向选项"></button>
                <button class="tool" aria-label="带边着色"><svg class="icon"><use href="#cube"/></svg></button><button class="drop" aria-label="渲染样式"></button>
                <button class="tool" aria-label="编辑截面"><svg class="icon"><use href="#sect1"/></svg></button>
                <button class="tool" aria-label="剪切截面"><svg class="icon"><use href="#sect2"/></svg></button><button class="drop" aria-label="截面选项"></button>
                <button class="tool" aria-label="背景"><svg class="icon"><use href="#frame"/></svg></button><button class="drop" aria-label="背景选项"></button>
                <span class="sep"></span>
                <button class="tool" aria-label="显示"><svg class="icon"><use href="#clip1"/></svg></button>
                <button class="tool" aria-label="隐藏"><svg class="icon"><use href="#clip2"/></svg></button>
                <button class="more" aria-label="更多"></button>
            </div>
            <div class="toolbar">
                <span class="grip"></span>
                <button class="tool" aria-label="图层设置"><svg class="icon"><use href="#layers"/></svg></button>
                <button class="tool" aria-label="WCS"><svg class="icon"><use href="#csys"/></svg></button><button class="drop" aria-label="WCS 选项"></button>
                <span class="sep"></span>
                <button class="tool" aria-label="选择对象"><svg class="icon"><use href="#hand"/></svg></button>
                <button class="tool" aria-label="对象显示"><svg class="icon"><use href="#palette"/></svg></button>
                <span class="sep"></span>
                <button class="tool" aria-label="显示和隐藏"><svg class="icon"><use href="#replay"/></svg></button><button class="drop" aria-label="显示和隐藏选项"></button>
                <span class="sep"></span>
                <button class="tool" aria-label="测量距离"><svg class="icon"><use href="#meas1"/></svg></button><button class="drop" aria-label="测量选项"></button>
                <button class="tool" aria-label="简单距离"><svg class="icon"><use href="#meas2"/></svg></button>
                <button class="more" aria-label="更多"></button>
            </div>
        </div>

        <div class="toolrow">
            <div class="toolbar">
                <span class="grip"></span>
                <button class="tool off" aria-label="创建程序"><svg class="icon"><use href="#c-prog"/></svg></button>
                <button class="tool off" aria-label="创建刀具"><svg class="icon"><use href="#c-tool"/></svg></button>
                <button class="tool off" aria-label="创建几何体"><svg class="icon"><use href="#c-geo"/></svg></button>
                <button class="tool off" aria-label="创建方法"><svg class="icon"><use href="#c-meth"/></svg></button>
                <button class="tool off" aria-label="创建工序"><svg class="icon"><use href="#c-op"/></svg></button>
                <button class="more" aria-label="更多"></button>
            </div>
            <div class="toolbar">
                <span class="grip"></span>
                <button class="tool off" aria-label="生成刀轨"><svg class="icon"><use href="#gen"/></svg></button>
                <button class="tool off" aria-label="重播刀轨"><svg class="icon"><use href="#replayp"/></svg></button>
                <button class="tool off" aria-label="确认刀轨"><svg class="icon"><use href="#verify"/></svg></button>
                <button class="tool off" aria-label="列出刀轨"><svg class="icon"><use href="#listp"/></svg></button>
                <button class="tool off" aria-label="机床仿真"><svg class="icon"><use href="#machchk"/></svg></button>
                <button class="tool off" aria-label="同步"><svg class="icon"><use href="#sync"/></svg></button>
                <span class="sep"></span>
                <button class="tool off" aria-label="后处理"><svg class="icon"><use href="#post"/></svg></button>
                <button class="tool" aria-label="车间文档"><svg class="icon"><use href="#shop"/></svg></button>
                <button class="tool off" aria-label="加工时间"><svg class="icon"><use href="#millclock"/></svg></button>
                <button class="more" aria-label="更多"></button>
            </div>
            <div class="toolbar">
                <span class="grip"></span>
                <button class="tool off" aria-label="编辑对象"><svg class="icon"><use href="#milledit"/></svg></button>
                <button class="tool off" aria-label="剪切对象"><svg class="icon"><use href="#millcut"/></svg></button>
                <button class="tool off" aria-label="复制对象"><svg class="icon"><use href="#millcopy"/></svg></button>
                <button class="tool off" aria-label="粘贴对象"><svg class="icon"><use href="#millpaste"/></svg></button>
                <button class="tool off" aria-label="内部粘贴"><svg class="icon"><use href="#pasteinto"/></svg></button>
                <button class="tool off" aria-label="删除对象"><svg class="icon"><use href="#milldel"/></svg></button>
                <button class="tool off" aria-label="对象信息"><svg class="icon"><use href="#millinfo"/></svg></button>
                <button class="tool off" aria-label="显示对象"><svg class="icon"><use href="#milllight"/></svg></button>
                <button class="more" aria-label="更多"></button>
            </div>
            <div class="toolbar">
                <span class="grip"></span>
                <button class="tool off" aria-label="显示刀轨"><svg class="icon"><use href="#pathlight"/></svg></button>
                <button class="tool off" aria-label="重播"><svg class="icon"><use href="#replayp"/></svg></button>
                <button class="tool off" aria-label="切削移动"><svg class="icon"><use href="#hatch1"/></svg></button>
                <button class="tool off" aria-label="非切削移动"><svg class="icon"><use href="#hatch2"/></svg></button>
                <button class="tool off" aria-label="圆弧"><svg class="icon"><use href="#circ"/></svg></button>
                <button class="tool off" aria-label="样条"><svg class="icon"><use href="#curve"/></svg></button>
                <button class="tool off" aria-label="刀轨颜色"><svg class="icon"><use href="#boxpal"/></svg></button>
                <button class="tool off" aria-label="程序颜色"><svg class="icon"><use href="#treepal"/></svg></button>
                <button class="tool off" aria-label="刀具颜色"><svg class="icon"><use href="#toolpal"/></svg></button>
                <button class="more" aria-label="更多"></button>
            </div>
            <div class="toolbar">
                <span class="grip"></span>
                <button class="tool off" aria-label="毛坯定位"><svg class="icon"><use href="#fun1"/></svg></button>
                <button class="tool off" aria-label="车削起点"><svg class="icon"><use href="#fun2"/></svg></button><button class="drop" aria-label="起点选项"></button>
                <button class="tool off" aria-label="车削毛坯"><svg class="icon"><use href="#fun3"/></svg></button><button class="drop" aria-label="毛坯选项"></button>
                <button class="tool off" aria-label="车削部件"><svg class="icon"><use href="#fun4"/></svg></button><button class="drop" aria-label="部件选项"></button>
                <button class="more" aria-label="更多"></button>
            </div>
            <div class="toolbar">
                <span class="grip"></span>
                <button class="tool off" aria-label="特征视图"><svg class="icon"><use href="#feat1"/></svg></button>
                <button class="tool off" aria-label="特征组"><svg class="icon"><use href="#feat2"/></svg></button>
                <span class="sep"></span>
                <button class="tool off" aria-label="查找特征"><svg class="icon"><use href="#find"/></svg></button>
                <button class="tool off" aria-label="标记点"><svg class="icon"><use href="#tagpt"/></svg></button>
                <button class="tool off" aria-label="标记曲线"><svg class="icon"><use href="#tagring"/></svg></button>
                <button class="tool off" aria-label="标记圆柱"><svg class="icon"><use href="#tagcyl"/></svg></button>
                <button class="tool off" aria-label="标记特征"><svg class="icon"><use href="#tagbox"/></svg></button>
                <span class="sep"></span>
                <button class="tool off" aria-label="特征工序"><svg class="icon"><use href="#featop"/></svg></button>
                <span class="sep"></span>
                <button class="tool off" aria-label="删除特征"><svg class="icon"><use href="#x"/></svg></button>
                <button class="more" aria-label="更多"></button>
            </div>
        </div>

        <div class="toolrow indent">
            <div class="toolbar">
                <span class="grip"></span>
                <button class="tool off" aria-label="草图"><svg class="icon"><use href="#wirebox"/></svg></button>
                <button class="tool" aria-label="曲面"><svg class="icon"><use href="#rain"/></svg></button><button class="drop" aria-label="曲面选项"></button>
                <button class="tool off" aria-label="点"><svg class="icon"><use href="#plus"/></svg></button><button class="drop" aria-label="点选项"></button>
                <button class="tool off" aria-label="投影"><svg class="icon"><use href="#proj"/></svg></button><button class="drop" aria-label="投影选项"></button>
                <button class="tool off" aria-label="拉伸"><svg class="icon"><use href="#bridge"/></svg></button>
                <button class="tool" aria-label="移动面"><svg class="icon"><use href="#move"/></svg></button>
                <button class="tool off" aria-label="网格"><svg class="icon"><use href="#mesh"/></svg></button><button class="drop" aria-label="网格选项"></button>
                <button class="more" aria-label="更多"></button>
            </div>
            <div class="toolbar">
                <span class="grip"></span>
                <button class="tool off" aria-label="程序顺序视图"><svg class="icon"><use href="#t-prog"/></svg></button>
                <button class="tool off" aria-label="机床视图"><svg class="icon"><use href="#t-tool"/></svg></button>
                <button class="tool off" aria-label="几何视图"><svg class="icon"><use href="#t-geo"/></svg></button>
                <button class="tool off" aria-label="加工方法视图"><svg class="icon"><use href="#t-meth"/></svg></button>
                <button class="more" aria-label="更多"></button>
            </div>
            <div class="toolbar detached">
                <span class="grip"></span>
                <button class="tool off" aria-label="检测确认"><svg class="icon"><use href="#pr-ok"/></svg></button>
                <button class="tool off" aria-label="检测方法"><svg class="icon"><use href="#pr-box"/></svg></button>
                <button class="tool off" aria-label="检测列表"><svg class="icon"><use href="#pr-tree"/></svg></button>
                <button class="tool off" aria-label="检测表"><svg class="icon"><use href="#pr-grid"/></svg></button>
                <span class="sep"></span>
                <button class="tool off" aria-label="机械手"><svg class="icon"><use href="#arm"/></svg></button>
                <span class="sep"></span>
                <button class="tool off" aria-label="模板"><svg class="icon"><use href="#cards"/></svg></button>
                <button class="tool off" aria-label="文档"><svg class="icon"><use href="#shop2"/></svg></button>
                <span class="sep"></span>
                <button class="tool off" aria-label="工序列表"><svg class="icon"><use href="#milllist"/></svg></button>
                <button class="tool off" aria-label="工序编辑"><svg class="icon"><use href="#milledit"/></svg></button>
                <button class="tool off" aria-label="工序时间"><svg class="icon"><use href="#millclock"/></svg></button>
                <button class="tool off" aria-label="机床文档"><svg class="icon"><use href="#machdoc"/></svg></button>
                <button class="more" aria-label="更多"></button>
            </div>
            <div class="toolbar">
                <span class="grip"></span>
                <button class="tool off" aria-label="确认检测"><svg class="icon"><use href="#pr-ok"/></svg></button>
                <button class="tool off" aria-label="检测树"><svg class="icon"><use href="#pr-tree"/></svg></button>
                <button class="tool off" aria-label="检测网格"><svg class="icon"><use href="#pr-grid"/></svg></button>
                <button class="tool off" aria-label="坐标系"><svg class="icon"><use href="#axes"/></svg></button>
                <button class="more" aria-label="更多"></button>
            </div>
        </div>
    </div>

    <!-- 选择条 -->
    <div class="selectbar">
        <span class="combo filter"><select aria-label="类型过滤器"><option>没有选择过滤器</option></select></span>
        <span class="combo scope"><select aria-label="选择范围"><option>整个装配</option></select></span>
        <button class="mini off" aria-label="链"><svg><use href="#s-chain"/></svg></button>
        <span class="sep"></span>
        <button class="mini off" aria-label="过滤"><svg><use href="#s-fund"/></svg></button>
        <button class="mini" aria-label="捕捉"><svg><use href="#s-snap"/></svg></button><button class="drop" aria-label="捕捉选项"></button>
        <button class="mini off" aria-label="返回点"><svg><use href="#s-und"/></svg></button>
        <button class="mini off" aria-label="抓取"><svg><use href="#s-grab"/></svg></button>
        <span class="sep"></span>
        <button class="mini off" aria-label="多边形"><svg><use href="#s-hex"/></svg></button>
        <button class="mini off" aria-label="矩形"><svg><use href="#s-rect"/></svg></button><button class="drop" aria-label="套索选项"></button>
        <span class="sep"></span>
        <button class="mini" aria-label="体"><svg><use href="#s-car"/></svg></button>
        <button class="mini" aria-label="面"><svg><use href="#s-cube"/></svg></button>
        <span class="sep"></span>
        <span class="combo scope rule"><select aria-label="曲线规则"><option>单条曲线</option></select></span>
        <button class="mini" aria-label="在相交处停止"><svg><use href="#s-int"/></svg></button>
        <button class="mini" aria-label="跟随圆角"><svg><use href="#s-follow"/></svg></button>
        <button class="mini" aria-label="下一个"><svg><use href="#s-next"/></svg></button>
        <button class="more bar-end" aria-label="更多"></button>
    </div>

    <main class="work">
        <!-- 图形窗口 -->
        <section class="viewport">
            <svg class="scene" viewBox="0 179 1338 839" preserveAspectRatio="xMinYMin slice" role="img" aria-label="模型">
                <path d="M0 281L1338 266V294L0 308z" fill="#a9aaaa"/>
                <path d="M0 308L1338 294V454L611 462 0 207z" fill="#b4b4b4"/>
                <path d="M0 281L1338 266" stroke="#3c3c3c"/>
                <path d="M0 308L1338 294" stroke="#8d8d8d"/>
                <path d="M611 462L1338 454V594L596 602z" fill="#858585"/>
                <path d="M200 290L611 462 596 602 200 436z" fill="#747474"/>
                <path d="M200 290L611 462v17L200 304z" fill="#949494"/>
                <path d="M200 405L600 574l-4 28L200 436z" fill="#a0a2a2"/>
                <path d="M611 462L1338 454v17L610 479z" fill="#9c9c9c"/>
                <path d="M599 576L1338 567v27L596 602z" fill="#a5a5a5"/>
                <path d="M200 290L611 462 1338 454M200 436L596 602 1338 594M611 462L596 602" fill="none" stroke="#333"/>
                <path d="M200 304L611 478 616 480 607 575 600 574 200 405" fill="none" stroke="#555"/>
                <path d="M614 480L1338 471" stroke="#cf8a4e" stroke-width="2"/>
                <path d="M604 576L1338 567" stroke="#a89a62"/>

                <!-- 加工坐标系 -->
                <path d="M982 364L992 282" stroke="#0a3fe0" stroke-width="2"/>
                <path d="M993 263l3 20h-8z" fill="#0a3fe0"/>
                <path d="M982 364L1054 363" stroke="#c82a2a" stroke-width="2"/>
                <path d="M1071 364l-20-4v7z" fill="#e04040"/>
                <path d="M982 364L940 346" stroke="#2a8a2a" stroke-width="2"/>
                <path d="M928 342l14 1-3 6z" fill="#2a8a2a"/>
                <text x="973" y="261" fill="#2a50f0">ZM</text>
                <text x="929" y="339" fill="#2f9a2f">YM</text>
                <text x="1055" y="359" fill="#e03a3a">XM</text>

                <!-- 视图三重轴 -->
                <path d="M55 918l23-1 14 6-3 26-23 1-14-7z" fill="#d2d4d4" stroke="#aaa"/>
                <path d="M55 918l13 6 24-1M68 924l-2 26M78 917l-3 25 14 7M52 943l23-1" fill="none" stroke="#aaa"/>
                <path d="M67 946L70 914" stroke="#0a3fe0" stroke-width="3"/>
                <path d="M70 906l3 12h-6z" fill="#0a2fc0"/>
                <path d="M68 950h28" stroke="#c82a2a" stroke-width="2"/>
                <path d="M105 949l-10-3v6z" fill="#d83030"/>
                <path d="M64 949L48 943" stroke="#2a8a2a" stroke-width="2"/>
                <path d="M42 940l10 1-3 5z" fill="#1f7a1f"/>
                <circle cx="66" cy="950" r="4" fill="#b8b8b8"/>
                <text x="68" y="905" fill="#2a50f0" class="small">Z</text>
                <text x="37" y="943" fill="#2f9a2f" class="small">Y</text>
                <text x="106" y="954" fill="#e03a3a" class="small">X</text>
            </svg>

            <!-- 创建边界 -->
            <form class="dialog">
                <div class="dialog-title">
                    <button type="button" aria-label="对话框选项"><svg><use href="#gear"/></svg></button>
                    <h2>创建边界</h2>
                    <button type="button" aria-label="关闭对话框"><svg viewBox="0 0 16 16"><path d="M3 3l10 10M13 3L3 13" stroke="#fff" stroke-width="3"/></svg></button>
                </div>
                <div class="dialog-body">
                    <div class="field"><label for="b-type">类型</label><span class="combo w3"><select id="b-type"><option>开放的</option></select></span></div>
                    <div class="field"><label for="b-plane">刨</label><span class="combo w4"><select id="b-plane"><option>自动</option></select></span></div>
                    <div class="field"><label for="b-side">材料侧</label><span class="combo w2"><select id="b-side"><option>右</option></select></span></div>
                    <hr>
                    <div class="field"><label for="b-pos">刀具位置</label><span class="combo w2"><select id="b-pos"><option>相切</option></select></span></div>
                    <hr>
                    <button type="button" class="wide-btn">定制成员数据</button>
                    <hr>
                    <button type="button" class="wide-btn">成链</button>
                    <button type="button" class="wide-btn">移除上一个成员</button>
                    <button type="button" class="wide-btn">创建下一个边界</button>
                    <hr class="final">
                    <div class="dialog-actions">
                        <button type="button" class="ok">确定</button>
                        <button type="button">返回</button>
                        <button type="button">取消</button>
                    </div>
                </div>
            </form>
        </section>

        <!-- 部件导航器 -->
        <aside class="navigator">
            <div class="nav-title"><span class="pin"></span><h2>部件导航器</h2></div>
            <div class="tree">
                <table>
                    <thead>
                        <tr><th class="c-name">名称<i class="sort"></i></th><th class="c-new">最新</th><th class="c-note">附注</th><th></th></tr>
                    </thead>
                    <tbody>
                        <tr><td><div class="node"><span class="twig first"></span><svg><use href="#n-clock"/></svg><span>历史记录模式</span></div></td><td></td><td></td><td></td></tr>
                        <tr><td><div class="node"><span class="twig"><button aria-label="展开">+</button></span><svg><use href="#n-view"/></svg><span>模型视图</span></div></td><td></td><td></td><td></td></tr>
                        <tr><td><div class="node"><span class="twig"><button aria-label="展开">+</button></span><svg><use href="#n-tick"/></svg><svg><use href="#n-cam"/></svg><span>摄像机</span></div></td><td></td><td></td><td></td></tr>
                        <tr><td><div class="node"><span class="twig"></span><svg><use href="#n-expr"/></svg><span>用户表达式</span></div></td><td></td><td></td><td></td></tr>
                        <tr><td><div class="node"><span class="twig end"><button aria-label="折叠">−</button></span><svg><use href="#n-fold"/></svg><span>模型历史记录</span></div></td><td></td><td></td><td></td></tr>
                        <tr><td><div class="node child muted"><span class="twig"></span><svg><use href="#n-warn"/></svg><svg><use href="#n-sketch"/></svg><span>草图<span class="key"> (1) "SKETCH_...</span></span></div></td><td><svg class="tick"><use href="#n-tick"/></svg></td><td></td><td></td></tr>
                        <tr><td><div class="node child"><span class="twig"></span><input type="checkbox" checked aria-label="拉伸 (2)"><svg><use href="#n-ext"/></svg><span>拉伸<span class="key"> (2)</span></span></div></td><td><svg class="tick"><use href="#n-tick"/></svg></td><td></td><td></td></tr>
                        <tr><td><div class="node child strong"><span class="twig end"></span><input type="checkbox" checked aria-label="方块 (3)"><svg><use href="#n-block"/></svg><span>方块<span class="key"> (3)</span></span></div></td><td><svg class="tick"><use href="#n-tick"/></svg></td><td></td><td></td></tr>
                        <tr><td></td><td></td><td></td><td></td></tr>
                        <tr><td></td><td></td><td></td><td></td></tr>
                        <tr><td></td><td></td><td></td><td></td></tr>
                        <tr><td></td><td></td><td></td><td></td></tr>
                        <tr><td></td><td></td><td></td><td></td></tr>
                        <tr><td></td><td></td><td></td><td></td></tr>
                        <tr><td></td><td></td><td></td><td></td></tr>
                        <tr><td></td><td></td><td></td><td></td></tr>
                        <tr><td></td><td></td><td></td><td></td></tr>
                        <tr><td></td><td></td><td></td><td></td></tr>
                        <tr><td></td><td></td><td></td><td></td></tr>
                        <tr><td></td><td></td><td></td><td></td></tr>
                        <tr><td></td><td></td><td></td><td></td></tr>
                        <tr><td></td><td></td><td></td><td></td></tr>
                        <tr><td></td><td></td><td></td><td></td></tr>
                        <tr><td></td><td></td><td></td><td></td></tr>
                        <tr><td></td><td></td><td></td><td></td></tr>
                        <tr><td></td><td></td><td></td><td></td></tr>
                        <tr><td></td><td></td><td></td><td></td></tr>
                        <tr><td></td><td></td><td></td><td></td></tr>
                        <tr><td></td><td></td><td></td><td></td></tr>
                        <tr><td></td><td></td><td></td><td></td></tr>
                        <tr><td></td><td></td><td></td><td></td></tr>
                        <tr><td></td><td></td><td></td><td></td></tr>
                        <tr><td></td><td></td><td></td><td></td></tr>
                        <tr><td></td><td></td><td></td><td></td></tr>
                        <tr><td></td><td></td><td></td><td></td></tr>
                    </tbody>
                </table>
            </div>
            <div class="splitter"><span class="handle"></span></div>
            <div class="panels">
                <button class="panel"><span>相依性</span><i><svg viewBox="0 0 12 10"><path d="M1 1l5 8 5-8" fill="none" stroke="#555" stroke-width="2"/></svg></i></button>
                <button class="panel"><span>细节</span><i><svg viewBox="0 0 12 10"><path d="M1 1l5 8 5-8" fill="none" stroke="#555" stroke-width="2"/></svg></i></button>
                <button class="panel"><span>预览</span><i><svg viewBox="0 0 12 10"><path d="M1 1l5 8 5-8" fill="none" stroke="#555" stroke-width="2"/></svg></i></button>
            </div>
        </aside>

        <!-- 资源条 -->
        <nav class="rail">
            <button class="rail-gear" aria-label="资源条选项"><svg><use href="#gear"/></svg></button>
            <button class="tab" aria-label="装配导航器"><svg><use href="#r-asm"/></svg></button>
            <button class="tab" aria-label="约束导航器"><svg><use href="#r-con"/></svg></button>
            <button class="tab active" aria-label="部件导航器"><svg><use href="#r-part"/></svg></button>
            <button class="tab" aria-label="工序导航器"><svg><use href="#r-op"/></svg></button>
            <button class="tab" aria-label="加工特征导航器"><svg><use href="#r-tool"/></svg></button>
            <button class="tab" aria-label="机床导航器"><svg><use href="#r-mach"/></svg></button>
            <button class="tab" aria-label="重用库"><svg><use href="#r-books"/></svg></button>
            <button class="tab apart" aria-label="HD3D 工具"><svg><use href="#r-info"/></svg></button>
            <button class="tab apart" aria-label="Web 浏览器"><svg><use href="#r-web"/></svg></button>
            <button class="tab apart" aria-label="历史记录"><svg><use href="#r-hist"/></svg></button>
            <button class="tab" aria-label="系统材料"><svg><use href="#r-vis"/></svg></button>
            <button class="tab" aria-label="加工向导"><svg><use href="#r-wiz"/></svg></button>
            <button class="tab" aria-label="系统场景"><svg><use href="#r-tools"/></svg></button>
            <button class="tab" aria-label="角色"><svg><use href="#r-role"/></svg></button>
            <span class="meter"></span>
        </nav>
    </main>

    <footer class="status">
        <p>部件边界<span class="key"> - </span>选择对象<span class="key"> #2</span></p>
        <p></p>
        <span class="cell"></span>
        <span class="cell full"><svg viewBox="0 0 16 16"><path d="M1 4V1h3M12 1h3v3M15 12v3h-3M4 15H1v-3" fill="none" stroke="#fff" stroke-width="2"/><path d="M3 3h10v10H3z" fill="#fff" stroke="#333" stroke-width="1.500"/><path d="M5 5h6v6H5z" fill="#2f7fe0"/></svg></span>
        <span class="cell end"></span>
    </footer>

    <!-- 任务栏 -->
    <div class="taskbar">
        <svg class="task-icons" viewBox="0 0 560 8" aria-hidden="true">
            <circle cx="27" cy="18" r="17" fill="#8fa6bc" stroke="#dfe8f0"/>
            <path d="M75 6h14v2H75z" fill="#e8c070"/>
            <rect x="135" y="4" width="32" height="10" rx="3" fill="#222"/>
            <path d="M184 0h58v8h-58zM494 0h58v8h-58z" fill="#b9dcec" stroke="#234"/>
            <circle cx="213" cy="15" r="11" fill="#1a8ae8"/>
            <rect x="260" y="4" width="31" height="8" rx="2" fill="#0be01a"/>
            <rect x="322" y="4" width="30" height="10" rx="4" fill="#fff"/>
            <path d="M385 4h14v4h-14z" fill="#ffd83a"/>
            <path d="M398 4h17v4h-17z" fill="#f0281a"/>
            <circle cx="461" cy="15" r="11" fill="#00d8ff"/>
            <path d="M510 5h14l-2 3h-12z" fill="#d83a50"/>
        </svg>
        <time>20:21</time>
        <span class="desk"></span>
    </div>

    <!-- 加速球 -->
    <svg class="ball" viewBox="0 0 72 72" role="img" aria-label="25%">
        <defs>
            <linearGradient id="g-ball" x1="0" y1="0" x2="0" y2="1"><stop offset="0" stop-color="#24b6f0"/><stop offset=".6" stop-color="#3f7cd8"/><stop offset="1" stop-color="#4a55a8"/></linearGradient>
        </defs>
        <circle cx="36" cy="36" r="34" fill="url(#g-ball)" stroke="#6468a0" stroke-width="2"/>
        <path d="M8 52C20 44 52 44 64 52A33 33 0 0 1 8 52z" fill="#434488"/>
        <path d="M11 22A29 29 0 0 1 62 50" fill="none" stroke="#16d2ff" stroke-width="3"/>
        <path d="M11 23A29 29 0 0 0 10 51" fill="none" stroke="#3ff0d8" stroke-width="3"/>
        <circle cx="11" cy="23" r="3" fill="#6af07a"/>
        <text x="15" y="41" class="big">25</text>
        <text x="48" y="41" class="unit">%</text>
        <text x="35" y="60" class="unit">0 K/s</text>
        <path d="M16 54h2v4h3l-4 4-4-4h3z" fill="#1fe02f"/>
    </svg>

    <!-- 水印 -->
    <div class="watermark">
        <svg viewBox="0 0 72 82" aria-hidden="true">
            <path d="M36 0l36 20v41L36 82 0 61V20z" fill="#2ba6e0"/>
            <path d="M36 0l36 20v20L40 18C28 12 12 13 0 20z" fill="#7ccbf2"/>
            <path d="M0 20c14-7 30-6 42 0L18 34C14 50 16 64 30 78L0 61z" fill="#58b8ea"/>
            <path d="M36 20l18 11v22L36 63 18 53V31z" fill="#2b9edb" stroke="#fff" stroke-width="4"/>
            <path d="M36 23l15 9-15 9-15-9z" fill="#8fd0f4"/>
            <path d="M36 41v19M36 41l15-9M36 41L21 32M50 8c8 6 12 20 8 28M0 20c14-8 30-8 42-2M18 74c-2-10-2-20-2-32M72 40c-8 18-20 24-52 16" stroke="#fff" fill="none" stroke-width="1.500"/>
        </svg>
        <div>
            <strong>3D世界网</strong>
            <span>WWW.3DSJW.COM</span>
        </div>
    </div>

</body>
</html>
```
FILE: styles.css
```css
* {
    box-sizing: border-box;
}
body {
    margin: 0;
    height: 100vh;
    display: flex;
    flex-direction: column;
    overflow: hidden;
    position: relative;
    font-family: "Noto Sans CJK SC", sans-serif;
    font-size: 12px;
    line-height: 16px;
    color: #000;
    background: #d8d8d8;
}
h1, h2, p {
    margin: 0;
    font-size: 12px;
}
button, input, select {
    font: inherit;
    color: inherit;
    margin: 0;
}
button {
    display: flex;
    align-items: center;
    justify-content: center;
    padding: 0;
    border: none;
    background: none;
}
a {
    color: inherit;
    text-decoration: none;
}
.sprite {
    position: absolute;
    width: 0;
    height: 0;
}
.key {
    font-family: "Liberation Mono", monospace;
    font-size: 10px;
    white-space: pre;
}

/* 标题栏 */
.titlebar {
    flex: none;
    height: 26px;
    display: flex;
    align-items: center;
    padding: 0 2px;
    background: #1c1c1c;
    border-top: 3px solid #55585c;
    border-bottom: 1px solid #000;
    color: #fff;
}
.app-icon {
    width: 18px;
    height: 18px;
    margin-right: 3px;
}
.titlebar h1 {
    flex: 1;
    font-family: "Noto Sans", "Noto Sans CJK SC", sans-serif;
    font-weight: normal;
    white-space: pre;
    text-spacing-trim: space-all;
}
.brand {
    font-family: "Open Sans", sans-serif;
    font-weight: 800;
    font-size: 13px;
    margin-right: 28px;
}
.win-buttons, .mdi-buttons {
    display: flex;
    gap: 4px;
}
.win-buttons button {
    width: 18px;
    height: 18px;
    border-radius: 2px;
    border: 1px solid #6a6a6a;
    background: linear-gradient(#777, #3c3c3c 50%, #555);
}
.win-buttons .close {
    border-color: #e87a60;
    background: linear-gradient(#f08a70, #d8351a 50%, #f0604a);
}
.win-buttons svg, .mdi-buttons svg {
    width: 16px;
    height: 16px;
}

/* 菜单 */
.menubar {
    flex: none;
    height: 23px;
    display: flex;
    align-items: center;
    gap: 13px;
    padding-right: 4px;
    background: #e3e3e3;
    border-bottom: 1px solid #bbb;
}
.menubar .grip {
    height: 16px;
}
.menu-icon {
    width: 16px;
    height: 18px;
    margin: 0 -7px 0 -12px;
}
.menubar .wide {
    margin-right: 12px;
}
.mdi-buttons {
    gap: 2px;
    margin-left: auto;
}
.mdi-buttons button {
    width: 17px;
    height: 17px;
    border: 1px solid #777;
    border-radius: 3px;
    background: linear-gradient(#fff, #ddd);
}
.mdi-buttons button:disabled {
    border-color: #c4c4c4;
}

/* 工具栏 */
.toolbars {
    flex: none;
    background: linear-gradient(#e0e0e0, #cccccc);
    border-bottom: 1px solid #8c8c8c;
}
.toolrow {
    display: flex;
    height: 34px;
}
.toolrow.indent {
    padding-left: 308px;
}
.toolbar {
    display: flex;
    align-items: center;
    border: 1px solid #b4b4b4;
    border-top-color: #f4f4f4;
    border-left-color: #f4f4f4;
}
.detached {
    margin-left: 146px;
}
.grip {
    flex: none;
    width: 6px;
    height: 23px;
    padding-left: 3px;
    background: repeating-linear-gradient(#fff 0 2px, #aaa 2px 3px, transparent 3px 4px) content-box;
}
.tool {
    width: 31px;
    height: 28px;
}
.icon {
    width: 24px;
    height: 24px;
}
.off svg {
    opacity: .6;
    filter: saturate(.8);
}
.start {
    width: 68px;
    gap: 4px;
}
.arrow, .drop::before, .more::before {
    content: "";
    border: 3px solid transparent;
    border-top-color: #000;
    border-bottom: none;
}
.drop {
    width: 12px;
    height: 28px;
    padding-left: 3px;
}
.more {
    width: 14px;
    height: 28px;
    padding-top: 14px;
}
.sep {
    flex: none;
    width: 2px;
    height: 30px;
    margin: 0 2px;
    background: linear-gradient(90deg, #b4b4b4 50%, #f6f6f6 50%);
}
.finder {
    display: flex;
    align-items: center;
    width: 110px;
    height: 22px;
    margin: 0 2px;
    padding: 0 3px 0 1px;
    background: #fff;
    border: 1px solid #999;
}
.finder input {
    flex: 1;
    min-width: 0;
    padding: 0;
    border: none;
    outline: none;
    background: none;
}
.finder input::placeholder {
    color: #8c8c8c;
}
.finder svg {
    width: 16px;
    height: 16px;
}

/* 选择条 */
.selectbar {
    flex: none;
    height: 27px;
    display: flex;
    align-items: center;
    padding-left: 5px;
    background: linear-gradient(#c2c2c2, #dadada 60%);
    border-bottom: 1px solid #999;
}
.selectbar .combo {
    height: 17px;
}
.selectbar .combo select {
    padding-left: 0;
}
.selectbar .sep {
    height: 24px;
    margin: 0 3px;
}
.filter {
    width: 114px;
    margin-right: 8px;
}
.scope {
    width: 120px;
    margin-right: 4px;
}
.rule {
    margin-left: 4px;
    margin-right: 6px;
}
.mini {
    width: 22px;
    height: 20px;
}
.mini svg {
    width: 16px;
    height: 16px;
}
.selectbar .drop {
    width: 9px;
}
.bar-end {
    margin-left: auto;
    padding-top: 8px;
}

/* 下拉框 */
.combo {
    position: relative;
    display: flex;
    height: 18px;
}
.combo select {
    width: 100%;
    padding: 0 16px 0 1px;
    line-height: 14px;
    appearance: none;
    background: #fff;
    border: 1px solid #777;
    border-radius: 3px;
}
.combo::after {
    content: "";
    position: absolute;
    top: 1px;
    right: 1px;
    bottom: 1px;
    width: 16px;
    border-radius: 0 2px 2px 0;
    background:
        conic-gradient(from -40deg at 50% 100%, #111 80deg, transparent 0) 3px 5px / 10px 6px no-repeat,
        linear-gradient(#3a78d8, #a8dcff);
    pointer-events: none;
}

/* 工作区 */
.work {
    flex: 1;
    min-height: 0;
    display: flex;
}
.viewport {
    flex: 1;
    min-width: 0;
    position: relative;
    overflow: hidden;
    background: linear-gradient(#b2b4b6, #cfd1d3 38%, #e0e2e3 65%, #e6e8ea);
}
.scene {
    display: block;
    width: 100%;
    height: 100%;
    font-family: "Open Sans", sans-serif;
    font-size: 12px;
}
.scene .small {
    font-size: 11px;
}

/* 对话框 */
.dialog {
    position: absolute;
    top: 1px;
    left: 0;
    width: 290px;
    background: #ebebeb;
    border: 1px solid #888;
    border-top: none;
    border-bottom: 9px solid #1a1a1a;
    border-radius: 0 0 5px 5px;
}
.dialog-title {
    display: flex;
    height: 21px;
    color: #fff;
    background: linear-gradient(#5a5c5c, #3a3a3a 45%, #151515 50%, #1c1c1c);
}
.dialog-title button {
    width: 21px;
    border-right: 1px solid #999;
}
.dialog-title button:last-child {
    border-right: none;
    border-left: 1px solid #999;
}
.dialog-title svg {
    width: 13px;
    height: 13px;
}
.dialog-title h2 {
    flex: 1;
    padding: 0 9px;
    line-height: 18px;
    font-size: 13px;
}
.dialog-body {
    display: flex;
    flex-direction: column;
    gap: 4px;
    padding: 9px 10px 11px 9px;
}
.field {
    display: flex;
    align-items: center;
    justify-content: space-between;
}
.field select {
    padding-left: 3px;
}
.w2 {
    width: 50px;
}
.w3 {
    width: 62px;
}
.w4 {
    width: 74px;
}
.dialog hr {
    width: 100%;
    height: 2px;
    margin: -1px 0 -1px;
    border: none;
    border-top: 1px solid #bbb;
    border-bottom: 1px solid #fff;
}
.dialog hr.final {
    margin: 4px 0 0;
}
.wide-btn, .dialog-actions button {
    height: 22px;
    border: 1px solid #777;
    border-radius: 3px;
    background: linear-gradient(#fdfdfd, #e2e2e2 45%, #c6c7c8 50%, #f4f4f4);
}
.dialog-actions {
    display: flex;
    justify-content: flex-end;
    gap: 7px;
    padding-right: 6px;
}
.dialog-actions button {
    width: 52px;
    height: 18px;
}
.dialog-actions .ok {
    border-color: #2d7a2d;
    background: linear-gradient(#b8e8a8, #8fd870 45%, #6cc04a 50%, #b4f890);
}

/* 导航器 */
.navigator {
    flex: none;
    width: 551px;
    display: flex;
    flex-direction: column;
    padding: 0 5px 5px 9px;
    background: #ebebeb;
    border: 1px solid #777;
    border-left-color: #fff;
    border-right: 2px solid #fff;
}
.nav-title {
    display: flex;
    align-items: center;
    gap: 12px;
    height: 30px;
    padding-left: 4px;
}
.nav-title h2 {
    font-size: 13px;
}
.pin {
    width: 13px;
    height: 12px;
    border: 1px solid #000;
    border-top-width: 2px;
}
.tree {
    height: 721px;
    overflow: hidden;
    background: #fff;
    border: 1px solid #666;
}
.tree table {
    width: 100%;
    table-layout: fixed;
    border-collapse: collapse;
}
.tree th {
    height: 17px;
    padding: 0 6px;
    text-align: left;
    font-weight: normal;
    line-height: 14px;
    background: linear-gradient(#f4f5f5, #eaebec 55%, #d6d8da 60%);
    border-right: 1px solid #aaa;
    border-bottom: 1px solid #777;
}
.c-name {
    width: 200px;
}
.c-new, .c-note {
    width: 100px;
}
.tree td {
    height: 20px;
    padding: 0;
    border-right: 1px solid #e4e4e4;
    border-bottom: 1px solid #e4e4e4;
    color: #333;
}
.tree tbody tr:nth-child(even) {
    background: #f7f7f7;
}
.sort {
    display: inline-block;
    margin: 0 0 3px 16px;
    border: 5px solid transparent;
    border-top: none;
    border-bottom: 6px solid #111;
}
.node {
    display: flex;
    align-items: center;
    height: 19px;
    white-space: nowrap;
}
.node svg {
    width: 15px;
    height: 15px;
    margin-right: 3px;
}
.child {
    padding-left: 19px;
}
.twig {
    flex: none;
    display: flex;
    align-items: center;
    width: 20px;
    height: 20px;
    padding-left: 5px;
    background:
        repeating-linear-gradient(#999 0 1px, transparent 1px 2px) 9px 0 / 1px 100% no-repeat,
        repeating-linear-gradient(90deg, #999 0 1px, transparent 1px 2px) 9px 10px / 9px 1px no-repeat;
}
.twig.first {
    background-position: 9px 10px, 9px 10px;
}
.twig.end {
    background-size: 1px 10px, 9px 1px;
}
.twig button {
    width: 9px;
    height: 9px;
    border: 1px solid #777;
    border-radius: 2px;
    background: #fff;
    font-family: "Liberation Mono", monospace;
    font-size: 10px;
    line-height: 7px;
}
.node input {
    appearance: none;
    width: 12px;
    height: 12px;
    margin: 0 3px 0 2px;
    border: 1px solid #111;
    background:
        linear-gradient(45deg, transparent 40%, #12bb28 40% 62%, transparent 62%) 2px 5px / 5px 5px no-repeat,
        linear-gradient(-50deg, transparent 40%, #12bb28 40% 62%, transparent 62%) 3px 1px / 6px 8px no-repeat,
        #fff;
}
.tree .muted {
    color: #999;
}
.strong {
    font-weight: bold;
}
.tick {
    display: block;
    width: 12px;
    height: 12px;
    margin-left: 6px;
}
.splitter {
    display: flex;
    align-items: center;
    gap: 5px;
    height: 11px;
}
.splitter::before, .splitter::after {
    content: "";
    flex: 1;
    height: 2px;
    border-top: 1px solid #bbb;
    border-bottom: 1px solid #fff;
}
.handle {
    width: 102px;
    height: 6px;
    background: #d4d4d4;
    border: 1px solid #fff;
    border-right-color: #888;
    border-bottom-color: #888;
}
.panels {
    border: 1px solid #aaa;
    border-top: none;
    border-bottom: none;
}
.panel {
    width: 100%;
    height: 23px;
    justify-content: space-between;
    padding-left: 6px;
    background: linear-gradient(#f7f7f7, #ecedee 50%, #d8dadb 55%);
    border-bottom: 1px solid #888;
    font-size: 13px;
    font-weight: bold;
}
.panel i {
    display: flex;
    align-items: center;
    justify-content: center;
    width: 23px;
    height: 22px;
    border-left: 1px solid #aaa;
}
.panel svg {
    width: 12px;
    height: 10px;
}

/* 资源条 */
.rail {
    flex: none;
    width: 31px;
    display: flex;
    flex-direction: column;
    gap: 2px;
    align-items: flex-start;
    position: relative;
    background: linear-gradient(90deg, #8c8c8c, #b0b0b0 10px);
}
.rail-gear {
    width: 31px;
    height: 30px;
    margin-bottom: 12px;
}
.rail-gear svg {
    width: 14px;
    height: 14px;
}
.tab {
    width: 27px;
    height: 40px;
    border: 1px solid #777;
    border-left: none;
    border-radius: 0 4px 4px 0;
    background: linear-gradient(#e2e2e2, #cfcfcf);
}
.tab svg {
    width: 24px;
    height: 24px;
}
.tab.active {
    width: 29px;
    height: 44px;
    margin: -2px 0 -1px;
    background: #f0f0f0;
}
.tab.apart {
    margin-top: 12px;
}
.meter {
    position: absolute;
    right: 0;
    bottom: 41px;
    width: 10px;
    height: 59px;
    border-radius: 4px 0 0 4px;
    border: 1px solid #222838;
    background:
        repeating-linear-gradient(#6fe0b8 0 1px, transparent 1px 2px) 4px 41px / 5px 11px no-repeat,
        repeating-linear-gradient(#222838 0 1px, transparent 1px 2px) 4px 6px / 5px 35px no-repeat,
        #4a5064;
}

/* 状态栏 */
.status {
    flex: none;
    height: 22px;
    display: flex;
    align-items: center;
    background: #d8d8d8;
    border-top: 1px solid #f4f4f4;
    border-bottom: 1px solid #333;
}
.status p {
    flex: 1;
    height: 20px;
    padding-left: 3px;
    font-size: 13px;
    line-height: 18px;
    font-weight: bold;
    border-right: 1px solid #b0b0b0;
}
.status .key {
    font-size: 11px;
}
.cell {
    display: flex;
    align-items: center;
    width: 20px;
    height: 20px;
    border-right: 1px solid #b0b0b0;
}
.cell.full {
    width: 56px;
    padding-left: 3px;
}
.cell.full svg {
    width: 16px;
    height: 16px;
}
.cell.end {
    width: 18px;
    border: none;
}

/* 任务栏 */
.taskbar {
    flex: none;
    height: 8px;
    display: flex;
    overflow: hidden;
    background: linear-gradient(90deg, #1d5f8c, #4fa3cc 8%, #3f9ac8 40%, #8cc4dc 50%, #2a7ab8 72%, #1a66b0 85%, #123a70);
}
.task-icons {
    width: 560px;
    height: 8px;
}
.taskbar time {
    margin: 3px 25px 0 auto;
    color: #fff;
}
.desk {
    width: 14px;
    border: 1px solid #222;
    background: #6f8fb0;
}

/* 悬浮内容 */
.ball {
    position: absolute;
    right: 55px;
    bottom: 286px;
    width: 72px;
    height: 72px;
    font-family: "Open Sans", sans-serif;
    fill: #fff;
}
.ball .big {
    font-size: 28px;
    font-weight: 300;
}
.ball .unit {
    font-size: 11px;
}
.watermark {
    position: absolute;
    right: 24px;
    bottom: 13px;
    display: flex;
    align-items: center;
    gap: 9px;
    color: #fff;
    pointer-events: none;
}
.watermark svg {
    width: 72px;
    height: 82px;
    opacity: .7;
}
.watermark div {
    display: flex;
    flex-direction: column;
    opacity: .55;
}
.watermark strong {
    font-size: 42px;
    line-height: 44px;
}
.watermark span {
    font-family: "DejaVu Sans", sans-serif;
    font-size: 18px;
    line-height: 18px;
}
```
